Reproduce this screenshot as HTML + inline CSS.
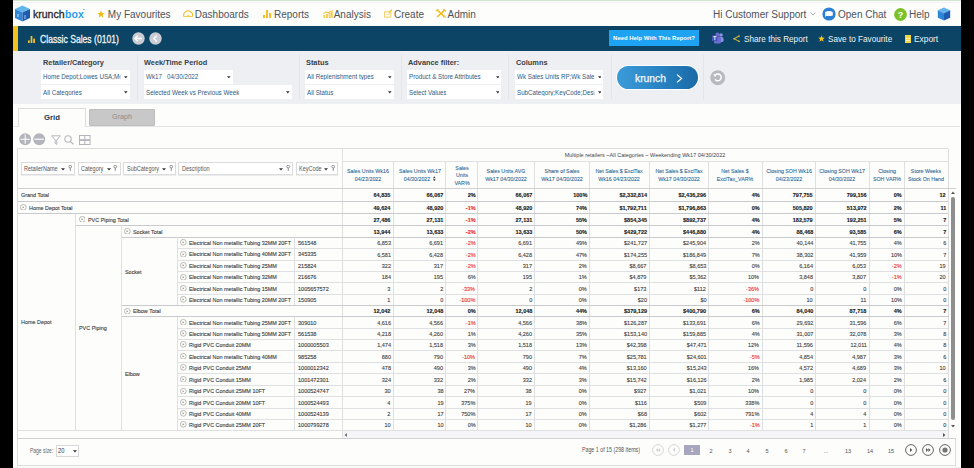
<!DOCTYPE html><html><head><meta charset="utf-8"><style>html,body{margin:0;padding:0;}body{width:974px;height:468px;overflow:hidden;position:relative;background:#fdfdfb;font-family:"Liberation Sans",sans-serif;}</style></head><body>
<div style="position:absolute;left:13px;top:0px;width:948px;height:1.2px;background:#cfe6cc"></div>
<div style="position:absolute;left:13px;top:2px;width:948px;height:1px;background:#f1f1f6"></div>
<svg style="position:absolute;left:14px;top:5px" width="17" height="17" viewBox="0 0 17 17">
<polygon points="1,4 8.5,0.5 16,4 8.5,7.5" fill="#63b6ec"/>
<polygon points="1,4 8.5,7.5 8.5,16.5 1,13" fill="#2f86d6"/>
<polygon points="8.5,7.5 16,4 16,13 8.5,16.5" fill="#1d5cae"/>
<rect x="3" y="9" width="2" height="3" fill="#9cc8ef" opacity=".7"/><rect x="10" y="10" width="2" height="4" fill="#8fb8e8" opacity=".6"/>
</svg>
<div style="position:absolute;left:33.1px;top:9.21px;font:normal 11px/11px 'Liberation Sans',sans-serif;color:#2b2b33;white-space:nowrap;transform:scaleX(0.955);transform-origin:0 0;-webkit-text-stroke:0.35px #2b2b33">krunch</div>
<div style="position:absolute;left:64.8px;top:9.21px;font:bold 11px/11px 'Liberation Sans',sans-serif;color:#2b9fe6;white-space:nowrap;transform:scaleX(0.96);transform-origin:0 0;">box</div>
<div style="position:absolute;left:83px;top:9px;width:2px;height:1px;background:#7cc0ec"></div>
<svg style="position:absolute;left:97px;top:10px" width="8" height="8" viewBox="0 0 10 10"><polygon points="5,0.3 6.2,3.7 9.8,3.8 7,6 8,9.6 5,7.5 2,9.6 3,6 0.2,3.8 3.8,3.7" fill="#f2b90f"/></svg>
<div style="position:absolute;left:107.8px;top:10.30px;font:normal 10px/10px 'Liberation Sans',sans-serif;color:#4b535c;white-space:nowrap;transform:scaleX(1);transform-origin:0 0;">My Favourites</div>
<svg style="position:absolute;left:183px;top:9.6px" width="10.2" height="7.6" viewBox="0 0 10.2 7.6"><path d="M1.3,6.8 C0.2,5.6 0.4,3 2.2,2.3 C3,0.5 7.2,0.5 8,2.3 C9.8,3 10,5.6 8.9,6.8 Z" fill="none" stroke="#f5c02a" stroke-width="1.2"/><path d="M4,6.8 C4,4.6 6.2,4.6 6.2,6.8" fill="none" stroke="#f5c02a" stroke-width="1"/></svg>
<div style="position:absolute;left:194.8px;top:10.30px;font:normal 10px/10px 'Liberation Sans',sans-serif;color:#4b535c;white-space:nowrap;transform:scaleX(1);transform-origin:0 0;">Dashboards</div>
<svg style="position:absolute;left:263px;top:10px" width="9" height="8" viewBox="0 0 9 8"><rect x="0" y="5" width="2" height="3" fill="#f4c02a"/><rect x="3" y="0" width="2" height="8" fill="#f4c02a"/><rect x="6" y="3" width="2.2" height="5" fill="#f4c02a"/></svg>
<div style="position:absolute;left:274px;top:10.30px;font:normal 10px/10px 'Liberation Sans',sans-serif;color:#4b535c;white-space:nowrap;transform:scaleX(1);transform-origin:0 0;">Reports</div>
<svg style="position:absolute;left:322.5px;top:10px" width="10" height="8" viewBox="0 0 10 8"><rect x="0.3" y="5" width="2" height="3" fill="#f6cf5a"/><rect x="3" y="4" width="2" height="4" fill="#f6cf5a"/><rect x="5.7" y="3" width="2" height="5" fill="#f6cf5a"/><rect x="8" y="1.5" width="1.8" height="6.5" fill="#f6cf5a"/><path d="M0.3,3.6 L3,2 L5.5,2.8 L9.6,0.4" stroke="#f4c23a" stroke-width="1.1" fill="none"/></svg>
<div style="position:absolute;left:333.7px;top:10.30px;font:normal 10px/10px 'Liberation Sans',sans-serif;color:#4b535c;white-space:nowrap;transform:scaleX(1);transform-origin:0 0;">Analysis</div>
<svg style="position:absolute;left:383.8px;top:9.3px" width="8.6" height="8.8" viewBox="0 0 8.6 8.8"><rect x="0.6" y="2.8" width="6.2" height="5.4" fill="none" stroke="#f6d270" stroke-width="1.1"/><path d="M2.6,5.2 L4,6 L5.8,4.4" stroke="#f6d270" stroke-width="0.9" fill="none"/><path d="M5,3.6 L8.2,0.6" stroke="#f4c84a" stroke-width="1.5"/></svg>
<div style="position:absolute;left:394px;top:10.30px;font:normal 10px/10px 'Liberation Sans',sans-serif;color:#4b535c;white-space:nowrap;transform:scaleX(1);transform-origin:0 0;">Create</div>
<svg style="position:absolute;left:435.9px;top:9.1px" width="10.2" height="9" viewBox="0 0 10.2 9"><path d="M1.2,8 L8.6,1.2" stroke="#f3bb14" stroke-width="1.6"/><path d="M1.2,1 L8.4,7.8" stroke="#f3bb14" stroke-width="1.5"/><path d="M0.3,2 L2.2,0.2 M7.4,0.3 L9.9,2.2" stroke="#f3bb14" stroke-width="1.1"/><circle cx="8.6" cy="7.8" r="1" fill="none" stroke="#f3bb14" stroke-width="0.7"/></svg>
<div style="position:absolute;left:447.5px;top:10.30px;font:normal 10px/10px 'Liberation Sans',sans-serif;color:#4b535c;white-space:nowrap;transform:scaleX(1);transform-origin:0 0;">Admin</div>
<div style="position:absolute;left:713px;top:9.60px;font:normal 10px/10px 'Liberation Sans',sans-serif;color:#4b535c;white-space:nowrap;transform:scaleX(1);transform-origin:0 0;">Hi Customer Support</div>
<svg style="position:absolute;left:809.5px;top:12px" width="6" height="4" viewBox="0 0 6 4"><path d="M0.5,0.5 L3,3 L5.5,0.5" fill="none" stroke="#9aa4b0" stroke-width="0.9"/></svg>
<svg style="position:absolute;left:822px;top:7px" width="14" height="14" viewBox="0 0 14 14"><circle cx="7" cy="7" r="6.6" fill="#2b7fd4"/><path d="M3.2,5 Q7,3 10.8,5 L10.8,8.4 Q7,9.6 4.5,8.8 L3.2,10 Z" fill="#fff"/></svg>
<div style="position:absolute;left:838px;top:9.60px;font:normal 10px/10px 'Liberation Sans',sans-serif;color:#4b535c;white-space:nowrap;transform:scaleX(1);transform-origin:0 0;">Open Chat</div>
<svg style="position:absolute;left:893.5px;top:7.5px" width="13" height="13" viewBox="0 0 13 13"><circle cx="6.5" cy="6.5" r="6.4" fill="#7cc12a"/><text x="6.5" y="10" text-anchor="middle" font-family="Liberation Sans" font-weight="bold" font-size="9" fill="#fff">?</text></svg>
<div style="position:absolute;left:909px;top:9.60px;font:normal 10px/10px 'Liberation Sans',sans-serif;color:#4b535c;white-space:nowrap;transform:scaleX(1);transform-origin:0 0;">Help</div>
<svg style="position:absolute;left:937px;top:7px" width="14" height="14" viewBox="0 0 17 17">
<polygon points="1,4 8.5,0.5 16,4 8.5,7.5" fill="#63b6ec"/>
<polygon points="1,4 8.5,7.5 8.5,16.5 1,13" fill="#2f86d6"/>
<polygon points="8.5,7.5 16,4 16,13 8.5,16.5" fill="#1d5cae"/></svg>
<div style="position:absolute;left:13px;top:26px;width:948px;height:25px;background:#0b4464"></div>
<div style="position:absolute;left:13px;top:26px;width:4.5px;height:25px;background:#f3c21f"></div>
<svg style="position:absolute;left:27.5px;top:36px" width="7" height="7" viewBox="0 0 8 8"><rect x="0" y="5" width="2" height="3" fill="#f4c02a"/><rect x="3" y="0" width="2" height="8" fill="#f4c02a"/><rect x="6" y="3" width="2" height="5" fill="#f4c02a"/></svg>
<div style="position:absolute;left:40px;top:34.45px;font:normal 10.5px/10.5px 'Liberation Sans',sans-serif;color:#eef2f5;white-space:nowrap;transform:scaleX(0.82);transform-origin:0 0;-webkit-text-stroke:0.3px #eef2f5">Classic Sales (0101)</div>
<svg style="position:absolute;left:132px;top:32px" width="13" height="13" viewBox="0 0 13 13"><circle cx="6.5" cy="6.5" r="6.2" fill="#c9ccd3"/><path d="M3,6.5 L10,6.5 M5.8,3.7 L3,6.5 L5.8,9.3" stroke="#fff" stroke-width="1.3" fill="none"/></svg>
<svg style="position:absolute;left:149px;top:32px" width="13" height="13" viewBox="0 0 13 13"><circle cx="6.5" cy="6.5" r="6.2" fill="#c9ccd3"/><path d="M7.8,3.5 L4.8,6.5 L7.8,9.5" stroke="#fff" stroke-width="1.3" fill="none"/></svg>
<div style="position:absolute;left:609px;top:30px;width:90px;height:15.6px;background:#1ea2f2"></div>
<div style="position:absolute;left:354px;width:600px;text-align:center;top:34.96px;font:bold 6px/6px 'Liberation Sans',sans-serif;color:#fff;white-space:nowrap;transform:scaleX(0.99);transform-origin:50% 0;">Need Help With This Report?</div>
<svg style="position:absolute;left:712px;top:32px" width="12" height="12" viewBox="0 0 12 12"><circle cx="9" cy="3" r="1.8" fill="#8b8fe6"/><rect x="6" y="5" width="5.5" height="5" rx="1.5" fill="#8b8fe6"/><circle cx="5.5" cy="2.5" r="2" fill="#6a6fd0"/><rect x="2" y="4.5" width="7" height="7" rx="1.5" fill="#6a6fd0"/><rect x="0" y="3.5" width="5.5" height="5.5" fill="#4e52b8"/><text x="2.7" y="8" text-anchor="middle" font-family="Liberation Sans" font-weight="bold" font-size="5" fill="#fff">T</text></svg>
<svg style="position:absolute;left:732.8px;top:34.8px" width="7" height="7.4" viewBox="0 0 7 7.4"><path d="M6,1 L1.2,3.7 L6,6.4" stroke="#c4b040" stroke-width="1.1" fill="none"/><circle cx="6" cy="1.1" r="0.9" fill="#c8b444"/><circle cx="1.1" cy="3.7" r="0.9" fill="#c8b444"/><circle cx="6" cy="6.3" r="0.9" fill="#c8b444"/></svg>
<div style="position:absolute;left:744px;top:34.59px;font:normal 9px/9px 'Liberation Sans',sans-serif;color:#eef2f5;white-space:nowrap;transform:scaleX(0.91);transform-origin:0 0;">Share this Report</div>
<svg style="position:absolute;left:818px;top:34.5px" width="7" height="7" viewBox="0 0 10 10"><polygon points="5,0.3 6.2,3.7 9.8,3.8 7,6 8,9.6 5,7.5 2,9.6 3,6 0.2,3.8 3.8,3.7" fill="#f5c518"/></svg>
<div style="position:absolute;left:827.5px;top:34.59px;font:normal 9px/9px 'Liberation Sans',sans-serif;color:#eef2f5;white-space:nowrap;transform:scaleX(0.91);transform-origin:0 0;">Save to Favourite</div>
<div style="position:absolute;left:905px;top:34.5px;width:6px;height:8px;background:#f3d44a"><div style="position:absolute;left:1px;top:3px;width:4px;height:1px;background:#fff7b0"></div><div style="position:absolute;left:1px;top:5px;width:4px;height:1px;background:#fff7b0"></div></div>
<div style="position:absolute;left:913.7px;top:34.59px;font:normal 9px/9px 'Liberation Sans',sans-serif;color:#eef2f5;white-space:nowrap;transform:scaleX(0.93);transform-origin:0 0;">Export</div>
<div style="position:absolute;left:13px;top:51px;width:948px;height:52.8px;background:#edeff2"></div>
<div style="position:absolute;left:137px;top:55px;width:1px;height:45px;background:#e3e5e8"></div>
<div style="position:absolute;left:298.5px;top:55px;width:1.0px;height:45px;background:#e3e5e8"></div>
<div style="position:absolute;left:401px;top:55px;width:1px;height:45px;background:#e3e5e8"></div>
<div style="position:absolute;left:508px;top:55px;width:1px;height:45px;background:#e3e5e8"></div>
<div style="position:absolute;left:610.5px;top:55px;width:1.0px;height:45px;background:#e3e5e8"></div>
<div style="position:absolute;left:703.2px;top:55px;width:1.0px;height:45px;background:#e3e5e8"></div>
<div style="position:absolute;left:42.5px;top:59.38px;font:bold 8px/8px 'Liberation Sans',sans-serif;color:#3a3f45;white-space:nowrap;transform:scaleX(0.92);transform-origin:0 0;">Retailer/Category</div>
<div style="position:absolute;left:41px;top:69.8px;width:89px;height:14.0px;background:#ffffff"></div>
<div style="position:absolute;left:43px;top:73.17px;font:normal 7px/7px 'Liberation Sans',sans-serif;color:#2d5b84;white-space:nowrap;transform:scaleX(0.89);transform-origin:0 0;max-width:87.1px;overflow:hidden">Home Depot;Lowes USA;Menards</div>
<svg style="position:absolute;left:124.40px;top:75.60px" width="3.6" height="2.6" viewBox="0 0 3.6 2.6"><path d="M0,0.2 H3.6 L1.8,2.4 Z" fill="#333"/></svg>
<div style="position:absolute;left:41px;top:84.8px;width:89px;height:14.1px;background:#ffffff"></div>
<div style="position:absolute;left:43px;top:88.97px;font:normal 7px/7px 'Liberation Sans',sans-serif;color:#2d5b84;white-space:nowrap;transform:scaleX(0.89);transform-origin:0 0;max-width:87.1px;overflow:hidden">All Categories</div>
<svg style="position:absolute;left:124.40px;top:91.40px" width="3.6" height="2.6" viewBox="0 0 3.6 2.6"><path d="M0,0.2 H3.6 L1.8,2.4 Z" fill="#333"/></svg>
<div style="position:absolute;left:144.4px;top:59.38px;font:bold 8px/8px 'Liberation Sans',sans-serif;color:#3a3f45;white-space:nowrap;transform:scaleX(0.92);transform-origin:0 0;">Week/Time Period</div>
<div style="position:absolute;left:144px;top:69.8px;width:88.6px;height:14.0px;background:#ffffff"></div>
<div style="position:absolute;left:146px;top:73.17px;font:normal 7px/7px 'Liberation Sans',sans-serif;color:#2d5b84;white-space:nowrap;transform:scaleX(0.89);transform-origin:0 0;max-width:86.6px;overflow:hidden">Wk17   04/30/2022</div>
<svg style="position:absolute;left:227.00px;top:75.60px" width="3.6" height="2.6" viewBox="0 0 3.6 2.6"><path d="M0,0.2 H3.6 L1.8,2.4 Z" fill="#333"/></svg>
<div style="position:absolute;left:144px;top:84.8px;width:147.7px;height:13.8px;background:#ffffff"></div>
<div style="position:absolute;left:146px;top:88.97px;font:normal 7px/7px 'Liberation Sans',sans-serif;color:#2d5b84;white-space:nowrap;transform:scaleX(0.89);transform-origin:0 0;max-width:153.0px;overflow:hidden">Selected Week vs Previous Week</div>
<svg style="position:absolute;left:286.10px;top:91.40px" width="3.6" height="2.6" viewBox="0 0 3.6 2.6"><path d="M0,0.2 H3.6 L1.8,2.4 Z" fill="#333"/></svg>
<div style="position:absolute;left:306.3px;top:59.38px;font:bold 8px/8px 'Liberation Sans',sans-serif;color:#3a3f45;white-space:nowrap;transform:scaleX(0.92);transform-origin:0 0;">Status</div>
<div style="position:absolute;left:304.8px;top:69.8px;width:89.1px;height:14.0px;background:#ffffff"></div>
<div style="position:absolute;left:306.8px;top:73.17px;font:normal 7px/7px 'Liberation Sans',sans-serif;color:#2d5b84;white-space:nowrap;transform:scaleX(0.89);transform-origin:0 0;max-width:87.2px;overflow:hidden">All Replenishment types</div>
<svg style="position:absolute;left:388.30px;top:75.60px" width="3.6" height="2.6" viewBox="0 0 3.6 2.6"><path d="M0,0.2 H3.6 L1.8,2.4 Z" fill="#333"/></svg>
<div style="position:absolute;left:304.8px;top:84.8px;width:89.1px;height:13.8px;background:#ffffff"></div>
<div style="position:absolute;left:306.8px;top:88.97px;font:normal 7px/7px 'Liberation Sans',sans-serif;color:#2d5b84;white-space:nowrap;transform:scaleX(0.89);transform-origin:0 0;max-width:87.2px;overflow:hidden">All Status</div>
<svg style="position:absolute;left:388.30px;top:91.40px" width="3.6" height="2.6" viewBox="0 0 3.6 2.6"><path d="M0,0.2 H3.6 L1.8,2.4 Z" fill="#333"/></svg>
<div style="position:absolute;left:408.3px;top:59.38px;font:bold 8px/8px 'Liberation Sans',sans-serif;color:#3a3f45;white-space:nowrap;transform:scaleX(0.92);transform-origin:0 0;">Advance filter:</div>
<div style="position:absolute;left:407.4px;top:69.8px;width:93.9px;height:14.0px;background:#ffffff"></div>
<div style="position:absolute;left:409.4px;top:73.17px;font:normal 7px/7px 'Liberation Sans',sans-serif;color:#2d5b84;white-space:nowrap;transform:scaleX(0.89);transform-origin:0 0;max-width:92.6px;overflow:hidden">Product &amp; Store Attributes</div>
<svg style="position:absolute;left:495.70px;top:75.60px" width="3.6" height="2.6" viewBox="0 0 3.6 2.6"><path d="M0,0.2 H3.6 L1.8,2.4 Z" fill="#333"/></svg>
<div style="position:absolute;left:407.4px;top:84.8px;width:93.9px;height:13.8px;background:#ffffff"></div>
<div style="position:absolute;left:409.4px;top:88.97px;font:normal 7px/7px 'Liberation Sans',sans-serif;color:#2d5b84;white-space:nowrap;transform:scaleX(0.89);transform-origin:0 0;max-width:92.6px;overflow:hidden">Select Values</div>
<svg style="position:absolute;left:495.70px;top:91.40px" width="3.6" height="2.6" viewBox="0 0 3.6 2.6"><path d="M0,0.2 H3.6 L1.8,2.4 Z" fill="#333"/></svg>
<div style="position:absolute;left:516px;top:59.38px;font:bold 8px/8px 'Liberation Sans',sans-serif;color:#3a3f45;white-space:nowrap;transform:scaleX(0.92);transform-origin:0 0;">Columns</div>
<div style="position:absolute;left:514.7px;top:69.8px;width:88.7px;height:14.0px;background:#ffffff"></div>
<div style="position:absolute;left:516.7px;top:73.17px;font:normal 7px/7px 'Liberation Sans',sans-serif;color:#2d5b84;white-space:nowrap;transform:scaleX(0.89);transform-origin:0 0;max-width:86.7px;overflow:hidden">Wk Sales Units RP;Wk Sales Units</div>
<svg style="position:absolute;left:597.80px;top:75.60px" width="3.6" height="2.6" viewBox="0 0 3.6 2.6"><path d="M0,0.2 H3.6 L1.8,2.4 Z" fill="#333"/></svg>
<div style="position:absolute;left:514.7px;top:84.8px;width:88.7px;height:13.8px;background:#ffffff"></div>
<div style="position:absolute;left:516.7px;top:88.97px;font:normal 7px/7px 'Liberation Sans',sans-serif;color:#2d5b84;white-space:nowrap;transform:scaleX(0.89);transform-origin:0 0;max-width:86.7px;overflow:hidden">SubCategory;KeyCode;Description</div>
<svg style="position:absolute;left:597.80px;top:91.40px" width="3.6" height="2.6" viewBox="0 0 3.6 2.6"><path d="M0,0.2 H3.6 L1.8,2.4 Z" fill="#333"/></svg>
<div style="position:absolute;left:616.7px;top:65.7px;width:80.9px;height:23.1px;border-radius:12px;background:linear-gradient(90deg,#3b9bd9,#2a84c4 50%,#1a6aa6);box-shadow:0 0 0 1px #fff"></div>
<div style="position:absolute;left:635.2px;top:73.26px;font:normal 10.5px/10.5px 'Liberation Sans',sans-serif;color:#f4f8fb;white-space:nowrap;transform:scaleX(0.985);transform-origin:0 0;-webkit-text-stroke:0.25px #f4f8fb">krunch</div>
<svg style="position:absolute;left:676px;top:73.5px" width="7" height="9" viewBox="0 0 7 9"><path d="M1,0.6 L5.6,4.5 L1,8.4" stroke="#fff" stroke-width="1.2" fill="none"/></svg>
<svg style="position:absolute;left:710px;top:70px" width="15.5" height="15.5" viewBox="0 0 16 16"><circle cx="8" cy="8" r="7.7" fill="#b9b9c1"/><path d="M5.2,9.6 A3.5,3.5 0 1 0 5.5,5.2" stroke="#fff" stroke-width="1.5" fill="none"/><polygon points="3.2,4.6 6.8,4.2 5.5,7.2" fill="#fff"/></svg>
<div style="position:absolute;left:13px;top:126px;width:947px;height:1px;background:#e3e4e6"></div>
<div style="position:absolute;left:18px;top:108px;width:68px;height:19px;background:#fdfdfb;border:1px solid #dcdcdc;border-bottom:none;box-sizing:border-box"></div>
<div style="position:absolute;left:-247.7px;width:600px;text-align:center;top:113.78px;font:bold 8px/8px 'Liberation Sans',sans-serif;color:#16364f;white-space:nowrap;transform:scaleX(0.96);transform-origin:50% 0;">Grid</div>
<div style="position:absolute;left:89px;top:109px;width:66px;height:17px;background:#c8c8c8;border:1px solid #bdbdbd;box-sizing:border-box;border-radius:1px"></div>
<div style="position:absolute;left:-178px;width:600px;text-align:center;top:112.92px;font:normal 7.5px/7.5px 'Liberation Sans',sans-serif;color:#8a8a8a;white-space:nowrap;transform:scaleX(0.95);transform-origin:50% 0;">Graph</div>
<svg style="position:absolute;left:18.6px;top:133.3px" width="12.4" height="12.4" viewBox="0 0 12 12"><circle cx="6" cy="6" r="5.8" fill="#b4b4bc"/><path d="M6,1.5 V10.5 M1.5,6 H10.5" stroke="#fff" stroke-width="1"/></svg>
<svg style="position:absolute;left:33.4px;top:133.3px" width="12.4" height="12.4" viewBox="0 0 12 12"><circle cx="6" cy="6" r="5.8" fill="#b4b4bc"/><path d="M1.5,6 H10.5" stroke="#fff" stroke-width="1.1"/></svg>
<svg style="position:absolute;left:51px;top:134.5px" width="10" height="10" viewBox="0 0 10 10"><path d="M0.6,0.8 H9.4 L5.8,5 V9.4 L4.2,8.4 V5 Z" fill="none" stroke="#b4b4bc" stroke-width="1"/></svg>
<svg style="position:absolute;left:64px;top:135px" width="10" height="10" viewBox="0 0 10 10"><circle cx="4" cy="4" r="3.2" fill="none" stroke="#b4b4bc" stroke-width="1.1"/><path d="M6.4,6.4 L9.4,9.4" stroke="#b4b4bc" stroke-width="1.3"/></svg>
<svg style="position:absolute;left:79px;top:135px" width="11.5" height="10" viewBox="0 0 11.5 10"><rect x="0.5" y="0.5" width="10.5" height="9" fill="none" stroke="#b4b4bc" stroke-width="1"/><path d="M5.75,0.5 V9.5" stroke="#b4b4bc" stroke-width="1"/><rect x="0.5" y="4.2" width="10.5" height="1.8" fill="#b4b4bc"/></svg>
<div style="position:absolute;left:17.6px;top:148.2px;width:930.9px;height:1.0px;background:#dcdcdc"></div>
<div style="position:absolute;left:17.1px;top:148.2px;width:1.0px;height:290.3px;background:#dcdcdc"></div>
<div style="position:absolute;left:948.0px;top:149px;width:1.0px;height:289.5px;background:#dcdcdc"></div>
<div style="position:absolute;left:342.2px;top:160.7px;width:606.3px;height:1.0px;background:#dfe0e2"></div>
<div style="position:absolute;left:341.7px;top:149px;width:1.0px;height:281.4px;background:#dfe0e2"></div>
<div style="position:absolute;left:392.9px;top:161.2px;width:1.0px;height:269.2px;background:#dfe0e2"></div>
<div style="position:absolute;left:445.3px;top:161.2px;width:1.0px;height:269.2px;background:#dfe0e2"></div>
<div style="position:absolute;left:477.4px;top:161.2px;width:1.0px;height:269.2px;background:#dfe0e2"></div>
<div style="position:absolute;left:534.0px;top:161.2px;width:1.0px;height:269.2px;background:#dfe0e2"></div>
<div style="position:absolute;left:589.1px;top:161.2px;width:1.0px;height:269.2px;background:#dfe0e2"></div>
<div style="position:absolute;left:648.8px;top:161.2px;width:1.0px;height:269.2px;background:#dfe0e2"></div>
<div style="position:absolute;left:708.4px;top:161.2px;width:1.0px;height:269.2px;background:#dfe0e2"></div>
<div style="position:absolute;left:761.5px;top:161.2px;width:1.0px;height:269.2px;background:#dfe0e2"></div>
<div style="position:absolute;left:815.1px;top:161.2px;width:1.0px;height:269.2px;background:#dfe0e2"></div>
<div style="position:absolute;left:868.5px;top:161.2px;width:1.0px;height:269.2px;background:#dfe0e2"></div>
<div style="position:absolute;left:903.7px;top:161.2px;width:1.0px;height:269.2px;background:#dfe0e2"></div>
<div style="position:absolute;left:17.6px;top:187.5px;width:938.9px;height:1.0px;background:#d0d1d3"></div>
<div style="position:absolute;left:345.4px;width:600px;text-align:center;top:152.16px;font:normal 6.2px/6.2px 'Liberation Sans',sans-serif;color:#3f444a;white-space:nowrap;transform:scaleX(0.89);transform-origin:50% 0;">Multiple retailers ~All Categories ~ Weekending Wk17 04/30/2022</div>
<div style="position:absolute;left:20.8px;top:162.3px;width:53.9px;height:12.4px;background:#fff;border:1px solid #dcdcdc;box-sizing:border-box;box-shadow:0 1px 0 #ececec"></div>
<div style="position:absolute;left:24.2px;top:165.76px;font:normal 6.4px/6.4px 'Liberation Sans',sans-serif;color:#555;white-space:nowrap;transform:scaleX(0.86);transform-origin:0 0;">RetailerName</div>
<svg style="position:absolute;left:60.7px;top:168.3px" width="4" height="3" viewBox="0 0 4 3"><path d="M0,0.2 H4 L2,2.6 Z" fill="#333"/></svg>
<svg style="position:absolute;left:67.5px;top:164.8px" width="4.5" height="6" viewBox="0 0 4.5 6"><circle cx="2.25" cy="1.6" r="1.4" fill="none" stroke="#777" stroke-width="0.8"/><path d="M2.25,3 V6" stroke="#777" stroke-width="0.8"/></svg>
<div style="position:absolute;left:77.9px;top:162.3px;width:42.7px;height:12.4px;background:#fff;border:1px solid #dcdcdc;box-sizing:border-box;box-shadow:0 1px 0 #ececec"></div>
<div style="position:absolute;left:81.30000000000001px;top:165.76px;font:normal 6.4px/6.4px 'Liberation Sans',sans-serif;color:#555;white-space:nowrap;transform:scaleX(0.86);transform-origin:0 0;">Category</div>
<svg style="position:absolute;left:106.6px;top:168.3px" width="4" height="3" viewBox="0 0 4 3"><path d="M0,0.2 H4 L2,2.6 Z" fill="#333"/></svg>
<svg style="position:absolute;left:113.39999999999999px;top:164.8px" width="4.5" height="6" viewBox="0 0 4.5 6"><circle cx="2.25" cy="1.6" r="1.4" fill="none" stroke="#777" stroke-width="0.8"/><path d="M2.25,3 V6" stroke="#777" stroke-width="0.8"/></svg>
<div style="position:absolute;left:123.4px;top:162.3px;width:52.4px;height:12.4px;background:#fff;border:1px solid #dcdcdc;box-sizing:border-box;box-shadow:0 1px 0 #ececec"></div>
<div style="position:absolute;left:126.80000000000001px;top:165.76px;font:normal 6.4px/6.4px 'Liberation Sans',sans-serif;color:#555;white-space:nowrap;transform:scaleX(0.86);transform-origin:0 0;">SubCategory</div>
<svg style="position:absolute;left:161.8px;top:168.3px" width="4" height="3" viewBox="0 0 4 3"><path d="M0,0.2 H4 L2,2.6 Z" fill="#333"/></svg>
<svg style="position:absolute;left:168.60000000000002px;top:164.8px" width="4.5" height="6" viewBox="0 0 4.5 6"><circle cx="2.25" cy="1.6" r="1.4" fill="none" stroke="#777" stroke-width="0.8"/><path d="M2.25,3 V6" stroke="#777" stroke-width="0.8"/></svg>
<div style="position:absolute;left:178.2px;top:162.3px;width:115.1px;height:12.4px;background:#fff;border:1px solid #dcdcdc;box-sizing:border-box;box-shadow:0 1px 0 #ececec"></div>
<div style="position:absolute;left:181.6px;top:165.76px;font:normal 6.4px/6.4px 'Liberation Sans',sans-serif;color:#555;white-space:nowrap;transform:scaleX(0.86);transform-origin:0 0;">Description</div>
<svg style="position:absolute;left:279.3px;top:168.3px" width="4" height="3" viewBox="0 0 4 3"><path d="M0,0.2 H4 L2,2.6 Z" fill="#333"/></svg>
<svg style="position:absolute;left:286.1px;top:164.8px" width="4.5" height="6" viewBox="0 0 4.5 6"><circle cx="2.25" cy="1.6" r="1.4" fill="none" stroke="#777" stroke-width="0.8"/><path d="M2.25,3 V6" stroke="#777" stroke-width="0.8"/></svg>
<div style="position:absolute;left:296px;top:162.3px;width:42.4px;height:12.4px;background:#fff;border:1px solid #dcdcdc;box-sizing:border-box;box-shadow:0 1px 0 #ececec"></div>
<div style="position:absolute;left:299.4px;top:165.76px;font:normal 6.4px/6.4px 'Liberation Sans',sans-serif;color:#555;white-space:nowrap;transform:scaleX(0.86);transform-origin:0 0;">KeyCode</div>
<svg style="position:absolute;left:324.4px;top:168.3px" width="4" height="3" viewBox="0 0 4 3"><path d="M0,0.2 H4 L2,2.6 Z" fill="#333"/></svg>
<svg style="position:absolute;left:331.2px;top:164.8px" width="4.5" height="6" viewBox="0 0 4.5 6"><circle cx="2.25" cy="1.6" r="1.4" fill="none" stroke="#777" stroke-width="0.8"/><path d="M2.25,3 V6" stroke="#777" stroke-width="0.8"/></svg>
<div style="position:absolute;left:67.79999999999995px;width:600px;text-align:center;top:168.26px;font:normal 6.1px/6.1px 'Liberation Sans',sans-serif;color:#2d6896;white-space:nowrap;transform:scaleX(0.87);transform-origin:50% 0;;-webkit-text-stroke:0.1px #2d6896">Sales Units Wk16</div>
<div style="position:absolute;left:67.79999999999995px;width:600px;text-align:center;top:175.76px;font:normal 6.1px/6.1px 'Liberation Sans',sans-serif;color:#2d6896;white-space:nowrap;transform:scaleX(0.87);transform-origin:50% 0;;-webkit-text-stroke:0.1px #2d6896">04/23/2022</div>
<div style="position:absolute;left:119.60000000000002px;width:600px;text-align:center;top:168.26px;font:normal 6.1px/6.1px 'Liberation Sans',sans-serif;color:#2d6896;white-space:nowrap;transform:scaleX(0.87);transform-origin:50% 0;;-webkit-text-stroke:0.1px #2d6896">Sales Units Wk17</div>
<div style="position:absolute;left:116.60000000000002px;width:600px;text-align:center;top:175.76px;font:normal 6.1px/6.1px 'Liberation Sans',sans-serif;color:#2d6896;white-space:nowrap;transform:scaleX(0.87);transform-origin:50% 0;;-webkit-text-stroke:0.1px #2d6896">04/30/2022</div>
<div style="position:absolute;left:161.85000000000002px;width:600px;text-align:center;top:164.51px;font:normal 6.1px/6.1px 'Liberation Sans',sans-serif;color:#2d6896;white-space:nowrap;transform:scaleX(0.87);transform-origin:50% 0;;-webkit-text-stroke:0.1px #2d6896">Sales</div>
<div style="position:absolute;left:161.85000000000002px;width:600px;text-align:center;top:172.01px;font:normal 6.1px/6.1px 'Liberation Sans',sans-serif;color:#2d6896;white-space:nowrap;transform:scaleX(0.87);transform-origin:50% 0;;-webkit-text-stroke:0.1px #2d6896">Units</div>
<div style="position:absolute;left:161.85000000000002px;width:600px;text-align:center;top:179.51px;font:normal 6.1px/6.1px 'Liberation Sans',sans-serif;color:#2d6896;white-space:nowrap;transform:scaleX(0.87);transform-origin:50% 0;;-webkit-text-stroke:0.1px #2d6896">VAR%</div>
<div style="position:absolute;left:206.2px;width:600px;text-align:center;top:168.26px;font:normal 6.1px/6.1px 'Liberation Sans',sans-serif;color:#2d6896;white-space:nowrap;transform:scaleX(0.87);transform-origin:50% 0;;-webkit-text-stroke:0.1px #2d6896">Sales Units AVG</div>
<div style="position:absolute;left:206.2px;width:600px;text-align:center;top:175.76px;font:normal 6.1px/6.1px 'Liberation Sans',sans-serif;color:#2d6896;white-space:nowrap;transform:scaleX(0.87);transform-origin:50% 0;;-webkit-text-stroke:0.1px #2d6896">Wk17 04/30/2022</div>
<div style="position:absolute;left:262.04999999999995px;width:600px;text-align:center;top:168.26px;font:normal 6.1px/6.1px 'Liberation Sans',sans-serif;color:#2d6896;white-space:nowrap;transform:scaleX(0.87);transform-origin:50% 0;;-webkit-text-stroke:0.1px #2d6896">Share of Sales</div>
<div style="position:absolute;left:262.04999999999995px;width:600px;text-align:center;top:175.76px;font:normal 6.1px/6.1px 'Liberation Sans',sans-serif;color:#2d6896;white-space:nowrap;transform:scaleX(0.87);transform-origin:50% 0;;-webkit-text-stroke:0.1px #2d6896">Wk17 04/30/2022</div>
<div style="position:absolute;left:319.45000000000005px;width:600px;text-align:center;top:168.26px;font:normal 6.1px/6.1px 'Liberation Sans',sans-serif;color:#2d6896;white-space:nowrap;transform:scaleX(0.87);transform-origin:50% 0;;-webkit-text-stroke:0.1px #2d6896">Net Sales $ ExclTax</div>
<div style="position:absolute;left:319.45000000000005px;width:600px;text-align:center;top:175.76px;font:normal 6.1px/6.1px 'Liberation Sans',sans-serif;color:#2d6896;white-space:nowrap;transform:scaleX(0.87);transform-origin:50% 0;;-webkit-text-stroke:0.1px #2d6896">Wk16 04/23/2022</div>
<div style="position:absolute;left:379.0999999999999px;width:600px;text-align:center;top:168.26px;font:normal 6.1px/6.1px 'Liberation Sans',sans-serif;color:#2d6896;white-space:nowrap;transform:scaleX(0.87);transform-origin:50% 0;;-webkit-text-stroke:0.1px #2d6896">Net Sales $ ExclTax</div>
<div style="position:absolute;left:379.0999999999999px;width:600px;text-align:center;top:175.76px;font:normal 6.1px/6.1px 'Liberation Sans',sans-serif;color:#2d6896;white-space:nowrap;transform:scaleX(0.87);transform-origin:50% 0;;-webkit-text-stroke:0.1px #2d6896">Wk17 04/30/2022</div>
<div style="position:absolute;left:435.45000000000005px;width:600px;text-align:center;top:168.26px;font:normal 6.1px/6.1px 'Liberation Sans',sans-serif;color:#2d6896;white-space:nowrap;transform:scaleX(0.87);transform-origin:50% 0;;-webkit-text-stroke:0.1px #2d6896">Net Sales $</div>
<div style="position:absolute;left:435.45000000000005px;width:600px;text-align:center;top:175.76px;font:normal 6.1px/6.1px 'Liberation Sans',sans-serif;color:#2d6896;white-space:nowrap;transform:scaleX(0.87);transform-origin:50% 0;;-webkit-text-stroke:0.1px #2d6896">ExclTax_VAR%</div>
<div style="position:absolute;left:488.79999999999995px;width:600px;text-align:center;top:168.26px;font:normal 6.1px/6.1px 'Liberation Sans',sans-serif;color:#2d6896;white-space:nowrap;transform:scaleX(0.87);transform-origin:50% 0;;-webkit-text-stroke:0.1px #2d6896">Closing SOH Wk16</div>
<div style="position:absolute;left:488.79999999999995px;width:600px;text-align:center;top:175.76px;font:normal 6.1px/6.1px 'Liberation Sans',sans-serif;color:#2d6896;white-space:nowrap;transform:scaleX(0.87);transform-origin:50% 0;;-webkit-text-stroke:0.1px #2d6896">04/23/2022</div>
<div style="position:absolute;left:542.3px;width:600px;text-align:center;top:168.26px;font:normal 6.1px/6.1px 'Liberation Sans',sans-serif;color:#2d6896;white-space:nowrap;transform:scaleX(0.87);transform-origin:50% 0;;-webkit-text-stroke:0.1px #2d6896">Closing SOH Wk17</div>
<div style="position:absolute;left:542.3px;width:600px;text-align:center;top:175.76px;font:normal 6.1px/6.1px 'Liberation Sans',sans-serif;color:#2d6896;white-space:nowrap;transform:scaleX(0.87);transform-origin:50% 0;;-webkit-text-stroke:0.1px #2d6896">04/30/2022</div>
<div style="position:absolute;left:586.6px;width:600px;text-align:center;top:168.26px;font:normal 6.1px/6.1px 'Liberation Sans',sans-serif;color:#2d6896;white-space:nowrap;transform:scaleX(0.87);transform-origin:50% 0;;-webkit-text-stroke:0.1px #2d6896">Closing</div>
<div style="position:absolute;left:586.6px;width:600px;text-align:center;top:175.76px;font:normal 6.1px/6.1px 'Liberation Sans',sans-serif;color:#2d6896;white-space:nowrap;transform:scaleX(0.87);transform-origin:50% 0;;-webkit-text-stroke:0.1px #2d6896">SOH VAR%</div>
<div style="position:absolute;left:626.35px;width:600px;text-align:center;top:168.26px;font:normal 6.1px/6.1px 'Liberation Sans',sans-serif;color:#2d6896;white-space:nowrap;transform:scaleX(0.87);transform-origin:50% 0;;-webkit-text-stroke:0.1px #2d6896">Store Weeks</div>
<div style="position:absolute;left:626.35px;width:600px;text-align:center;top:175.76px;font:normal 6.1px/6.1px 'Liberation Sans',sans-serif;color:#2d6896;white-space:nowrap;transform:scaleX(0.87);transform-origin:50% 0;;-webkit-text-stroke:0.1px #2d6896">Stock On Hand</div>
<svg style="position:absolute;left:433px;top:176.2px" width="2.6" height="5.5" viewBox="0 0 3 6"><path d="M0,2.4 L1.5,0 L3,2.4 Z M0,3.6 L1.5,6 L3,3.6 Z" fill="#333"/></svg>
<div style="position:absolute;left:950.8px;top:197.3px;width:4.2px;height:23px;"></div>
<div style="position:absolute;left:951px;top:197.3px;width:4px;height:223.0px;background:#8e8e8e;border-radius:2px"></div>
<svg style="position:absolute;left:951px;top:191px" width="4" height="3" viewBox="0 0 4 3"><path d="M0,3 L2,0.5 L4,3 Z" fill="#555"/></svg>
<svg style="position:absolute;left:951px;top:424.5px" width="4" height="3" viewBox="0 0 4 3"><path d="M0,0 L2,2.5 L4,0 Z" fill="#555"/></svg>
<div style="position:absolute;left:342.2px;top:430.4px;width:606.3px;height:7.9px;background:#f5f5f7"></div>
<div style="position:absolute;left:341.7px;top:430.4px;width:1.0px;height:7.9px;background:#dfe0e2"></div>
<div style="position:absolute;left:17.6px;top:437.8px;width:930.9px;height:1.0px;background:#d0d1d3"></div>
<svg style="position:absolute;left:344px;top:432.7px" width="3" height="4" viewBox="0 0 3 4"><path d="M3,0 L0.5,2 L3,4 Z" fill="#777"/></svg>
<svg style="position:absolute;left:943px;top:432.5px" width="3" height="4" viewBox="0 0 3 4"><path d="M0,0 L2.5,2 L0,4 Z" fill="#555"/></svg>
<div style="position:absolute;right:583.2px;top:191.91px;font:bold 6px/6px 'Liberation Sans',sans-serif;color:#1a1a1a;white-space:nowrap;transform:scaleX(0.92);transform-origin:100% 0;;-webkit-text-stroke:0.12px #1a1a1a">64,835</div>
<div style="position:absolute;right:530.8px;top:191.91px;font:bold 6px/6px 'Liberation Sans',sans-serif;color:#1a1a1a;white-space:nowrap;transform:scaleX(0.92);transform-origin:100% 0;;-webkit-text-stroke:0.12px #1a1a1a">66,067</div>
<div style="position:absolute;right:498.70000000000005px;top:191.91px;font:bold 6px/6px 'Liberation Sans',sans-serif;color:#1a1a1a;white-space:nowrap;transform:scaleX(0.92);transform-origin:100% 0;;-webkit-text-stroke:0.12px #1a1a1a">2%</div>
<div style="position:absolute;right:442.1px;top:191.91px;font:bold 6px/6px 'Liberation Sans',sans-serif;color:#1a1a1a;white-space:nowrap;transform:scaleX(0.92);transform-origin:100% 0;;-webkit-text-stroke:0.12px #1a1a1a">66,067</div>
<div style="position:absolute;right:387.0px;top:191.91px;font:bold 6px/6px 'Liberation Sans',sans-serif;color:#1a1a1a;white-space:nowrap;transform:scaleX(0.92);transform-origin:100% 0;;-webkit-text-stroke:0.12px #1a1a1a">100%</div>
<div style="position:absolute;right:327.30000000000007px;top:191.91px;font:bold 6px/6px 'Liberation Sans',sans-serif;color:#1a1a1a;white-space:nowrap;transform:scaleX(0.92);transform-origin:100% 0;;-webkit-text-stroke:0.12px #1a1a1a">$2,332,814</div>
<div style="position:absolute;right:267.70000000000005px;top:191.91px;font:bold 6px/6px 'Liberation Sans',sans-serif;color:#1a1a1a;white-space:nowrap;transform:scaleX(0.92);transform-origin:100% 0;;-webkit-text-stroke:0.12px #1a1a1a">$2,436,296</div>
<div style="position:absolute;right:214.60000000000002px;top:191.91px;font:bold 6px/6px 'Liberation Sans',sans-serif;color:#1a1a1a;white-space:nowrap;transform:scaleX(0.92);transform-origin:100% 0;;-webkit-text-stroke:0.12px #1a1a1a">4%</div>
<div style="position:absolute;right:161.0px;top:191.91px;font:bold 6px/6px 'Liberation Sans',sans-serif;color:#1a1a1a;white-space:nowrap;transform:scaleX(0.92);transform-origin:100% 0;;-webkit-text-stroke:0.12px #1a1a1a">797,755</div>
<div style="position:absolute;right:107.60000000000002px;top:191.91px;font:bold 6px/6px 'Liberation Sans',sans-serif;color:#1a1a1a;white-space:nowrap;transform:scaleX(0.92);transform-origin:100% 0;;-webkit-text-stroke:0.12px #1a1a1a">799,156</div>
<div style="position:absolute;right:72.39999999999998px;top:191.91px;font:bold 6px/6px 'Liberation Sans',sans-serif;color:#1a1a1a;white-space:nowrap;transform:scaleX(0.92);transform-origin:100% 0;;-webkit-text-stroke:0.12px #1a1a1a">0%</div>
<div style="position:absolute;right:28.100000000000023px;top:191.91px;font:bold 6px/6px 'Liberation Sans',sans-serif;color:#1a1a1a;white-space:nowrap;transform:scaleX(0.92);transform-origin:100% 0;;-webkit-text-stroke:0.12px #1a1a1a">12</div>
<div style="position:absolute;left:21px;top:191.81px;font:normal 6px/6px 'Liberation Sans',sans-serif;color:#3c3c3c;white-space:nowrap;transform:scaleX(0.905);transform-origin:0 0;;-webkit-text-stroke:0.12px #3c3c3c">Grand Total</div>
<div style="position:absolute;right:583.2px;top:204.61px;font:bold 6px/6px 'Liberation Sans',sans-serif;color:#1a1a1a;white-space:nowrap;transform:scaleX(0.92);transform-origin:100% 0;;-webkit-text-stroke:0.12px #1a1a1a">49,624</div>
<div style="position:absolute;right:530.8px;top:204.61px;font:bold 6px/6px 'Liberation Sans',sans-serif;color:#1a1a1a;white-space:nowrap;transform:scaleX(0.92);transform-origin:100% 0;;-webkit-text-stroke:0.12px #1a1a1a">48,920</div>
<div style="position:absolute;right:498.70000000000005px;top:204.61px;font:bold 6px/6px 'Liberation Sans',sans-serif;color:#ec2f2f;white-space:nowrap;transform:scaleX(0.92);transform-origin:100% 0;;-webkit-text-stroke:0.12px #ec2f2f">-1%</div>
<div style="position:absolute;right:442.1px;top:204.61px;font:bold 6px/6px 'Liberation Sans',sans-serif;color:#1a1a1a;white-space:nowrap;transform:scaleX(0.92);transform-origin:100% 0;;-webkit-text-stroke:0.12px #1a1a1a">48,920</div>
<div style="position:absolute;right:387.0px;top:204.61px;font:bold 6px/6px 'Liberation Sans',sans-serif;color:#1a1a1a;white-space:nowrap;transform:scaleX(0.92);transform-origin:100% 0;;-webkit-text-stroke:0.12px #1a1a1a">74%</div>
<div style="position:absolute;right:327.30000000000007px;top:204.61px;font:bold 6px/6px 'Liberation Sans',sans-serif;color:#1a1a1a;white-space:nowrap;transform:scaleX(0.92);transform-origin:100% 0;;-webkit-text-stroke:0.12px #1a1a1a">$1,792,711</div>
<div style="position:absolute;right:267.70000000000005px;top:204.61px;font:bold 6px/6px 'Liberation Sans',sans-serif;color:#1a1a1a;white-space:nowrap;transform:scaleX(0.92);transform-origin:100% 0;;-webkit-text-stroke:0.12px #1a1a1a">$1,796,863</div>
<div style="position:absolute;right:214.60000000000002px;top:204.61px;font:bold 6px/6px 'Liberation Sans',sans-serif;color:#1a1a1a;white-space:nowrap;transform:scaleX(0.92);transform-origin:100% 0;;-webkit-text-stroke:0.12px #1a1a1a">0%</div>
<div style="position:absolute;right:161.0px;top:204.61px;font:bold 6px/6px 'Liberation Sans',sans-serif;color:#1a1a1a;white-space:nowrap;transform:scaleX(0.92);transform-origin:100% 0;;-webkit-text-stroke:0.12px #1a1a1a">505,820</div>
<div style="position:absolute;right:107.60000000000002px;top:204.61px;font:bold 6px/6px 'Liberation Sans',sans-serif;color:#1a1a1a;white-space:nowrap;transform:scaleX(0.92);transform-origin:100% 0;;-webkit-text-stroke:0.12px #1a1a1a">513,972</div>
<div style="position:absolute;right:72.39999999999998px;top:204.61px;font:bold 6px/6px 'Liberation Sans',sans-serif;color:#1a1a1a;white-space:nowrap;transform:scaleX(0.92);transform-origin:100% 0;;-webkit-text-stroke:0.12px #1a1a1a">2%</div>
<div style="position:absolute;right:28.100000000000023px;top:204.61px;font:bold 6px/6px 'Liberation Sans',sans-serif;color:#1a1a1a;white-space:nowrap;transform:scaleX(0.92);transform-origin:100% 0;;-webkit-text-stroke:0.12px #1a1a1a">11</div>
<svg style="position:absolute;left:20.400000000000002px;top:203.70px" width="6.6" height="6.6" viewBox="0 0 8 8"><circle cx="4" cy="4" r="3.5" fill="none" stroke="#9a9a9a" stroke-width="0.8"/><path d="M3.2,2.6 L5,4 L3.2,5.4 Z" fill="#888"/></svg>
<div style="position:absolute;left:29.400000000000002px;top:204.51px;font:normal 6px/6px 'Liberation Sans',sans-serif;color:#3c3c3c;white-space:nowrap;transform:scaleX(0.905);transform-origin:0 0;;-webkit-text-stroke:0.12px #3c3c3c">Home Depot Total</div>
<div style="position:absolute;right:583.2px;top:216.71px;font:bold 6px/6px 'Liberation Sans',sans-serif;color:#1a1a1a;white-space:nowrap;transform:scaleX(0.92);transform-origin:100% 0;;-webkit-text-stroke:0.12px #1a1a1a">27,486</div>
<div style="position:absolute;right:530.8px;top:216.71px;font:bold 6px/6px 'Liberation Sans',sans-serif;color:#1a1a1a;white-space:nowrap;transform:scaleX(0.92);transform-origin:100% 0;;-webkit-text-stroke:0.12px #1a1a1a">27,131</div>
<div style="position:absolute;right:498.70000000000005px;top:216.71px;font:bold 6px/6px 'Liberation Sans',sans-serif;color:#ec2f2f;white-space:nowrap;transform:scaleX(0.92);transform-origin:100% 0;;-webkit-text-stroke:0.12px #ec2f2f">-1%</div>
<div style="position:absolute;right:442.1px;top:216.71px;font:bold 6px/6px 'Liberation Sans',sans-serif;color:#1a1a1a;white-space:nowrap;transform:scaleX(0.92);transform-origin:100% 0;;-webkit-text-stroke:0.12px #1a1a1a">27,131</div>
<div style="position:absolute;right:387.0px;top:216.71px;font:bold 6px/6px 'Liberation Sans',sans-serif;color:#1a1a1a;white-space:nowrap;transform:scaleX(0.92);transform-origin:100% 0;;-webkit-text-stroke:0.12px #1a1a1a">55%</div>
<div style="position:absolute;right:327.30000000000007px;top:216.71px;font:bold 6px/6px 'Liberation Sans',sans-serif;color:#1a1a1a;white-space:nowrap;transform:scaleX(0.92);transform-origin:100% 0;;-webkit-text-stroke:0.12px #1a1a1a">$854,345</div>
<div style="position:absolute;right:267.70000000000005px;top:216.71px;font:bold 6px/6px 'Liberation Sans',sans-serif;color:#1a1a1a;white-space:nowrap;transform:scaleX(0.92);transform-origin:100% 0;;-webkit-text-stroke:0.12px #1a1a1a">$892,737</div>
<div style="position:absolute;right:214.60000000000002px;top:216.71px;font:bold 6px/6px 'Liberation Sans',sans-serif;color:#1a1a1a;white-space:nowrap;transform:scaleX(0.92);transform-origin:100% 0;;-webkit-text-stroke:0.12px #1a1a1a">4%</div>
<div style="position:absolute;right:161.0px;top:216.71px;font:bold 6px/6px 'Liberation Sans',sans-serif;color:#1a1a1a;white-space:nowrap;transform:scaleX(0.92);transform-origin:100% 0;;-webkit-text-stroke:0.12px #1a1a1a">182,579</div>
<div style="position:absolute;right:107.60000000000002px;top:216.71px;font:bold 6px/6px 'Liberation Sans',sans-serif;color:#1a1a1a;white-space:nowrap;transform:scaleX(0.92);transform-origin:100% 0;;-webkit-text-stroke:0.12px #1a1a1a">192,251</div>
<div style="position:absolute;right:72.39999999999998px;top:216.71px;font:bold 6px/6px 'Liberation Sans',sans-serif;color:#1a1a1a;white-space:nowrap;transform:scaleX(0.92);transform-origin:100% 0;;-webkit-text-stroke:0.12px #1a1a1a">5%</div>
<div style="position:absolute;right:28.100000000000023px;top:216.71px;font:bold 6px/6px 'Liberation Sans',sans-serif;color:#1a1a1a;white-space:nowrap;transform:scaleX(0.92);transform-origin:100% 0;;-webkit-text-stroke:0.12px #1a1a1a">7</div>
<svg style="position:absolute;left:78.6px;top:215.80px" width="6.6" height="6.6" viewBox="0 0 8 8"><circle cx="4" cy="4" r="3.5" fill="none" stroke="#9a9a9a" stroke-width="0.8"/><path d="M3.2,2.6 L5,4 L3.2,5.4 Z" fill="#888"/></svg>
<div style="position:absolute;left:87.6px;top:216.61px;font:normal 6px/6px 'Liberation Sans',sans-serif;color:#3c3c3c;white-space:nowrap;transform:scaleX(0.905);transform-origin:0 0;;-webkit-text-stroke:0.12px #3c3c3c">PVC Piping Total</div>
<div style="position:absolute;right:583.2px;top:228.66px;font:bold 6px/6px 'Liberation Sans',sans-serif;color:#1a1a1a;white-space:nowrap;transform:scaleX(0.92);transform-origin:100% 0;;-webkit-text-stroke:0.12px #1a1a1a">13,944</div>
<div style="position:absolute;right:530.8px;top:228.66px;font:bold 6px/6px 'Liberation Sans',sans-serif;color:#1a1a1a;white-space:nowrap;transform:scaleX(0.92);transform-origin:100% 0;;-webkit-text-stroke:0.12px #1a1a1a">13,633</div>
<div style="position:absolute;right:498.70000000000005px;top:228.66px;font:bold 6px/6px 'Liberation Sans',sans-serif;color:#ec2f2f;white-space:nowrap;transform:scaleX(0.92);transform-origin:100% 0;;-webkit-text-stroke:0.12px #ec2f2f">-2%</div>
<div style="position:absolute;right:442.1px;top:228.66px;font:bold 6px/6px 'Liberation Sans',sans-serif;color:#1a1a1a;white-space:nowrap;transform:scaleX(0.92);transform-origin:100% 0;;-webkit-text-stroke:0.12px #1a1a1a">13,633</div>
<div style="position:absolute;right:387.0px;top:228.66px;font:bold 6px/6px 'Liberation Sans',sans-serif;color:#1a1a1a;white-space:nowrap;transform:scaleX(0.92);transform-origin:100% 0;;-webkit-text-stroke:0.12px #1a1a1a">50%</div>
<div style="position:absolute;right:327.30000000000007px;top:228.66px;font:bold 6px/6px 'Liberation Sans',sans-serif;color:#1a1a1a;white-space:nowrap;transform:scaleX(0.92);transform-origin:100% 0;;-webkit-text-stroke:0.12px #1a1a1a">$429,722</div>
<div style="position:absolute;right:267.70000000000005px;top:228.66px;font:bold 6px/6px 'Liberation Sans',sans-serif;color:#1a1a1a;white-space:nowrap;transform:scaleX(0.92);transform-origin:100% 0;;-webkit-text-stroke:0.12px #1a1a1a">$446,880</div>
<div style="position:absolute;right:214.60000000000002px;top:228.66px;font:bold 6px/6px 'Liberation Sans',sans-serif;color:#1a1a1a;white-space:nowrap;transform:scaleX(0.92);transform-origin:100% 0;;-webkit-text-stroke:0.12px #1a1a1a">4%</div>
<div style="position:absolute;right:161.0px;top:228.66px;font:bold 6px/6px 'Liberation Sans',sans-serif;color:#1a1a1a;white-space:nowrap;transform:scaleX(0.92);transform-origin:100% 0;;-webkit-text-stroke:0.12px #1a1a1a">88,468</div>
<div style="position:absolute;right:107.60000000000002px;top:228.66px;font:bold 6px/6px 'Liberation Sans',sans-serif;color:#1a1a1a;white-space:nowrap;transform:scaleX(0.92);transform-origin:100% 0;;-webkit-text-stroke:0.12px #1a1a1a">93,585</div>
<div style="position:absolute;right:72.39999999999998px;top:228.66px;font:bold 6px/6px 'Liberation Sans',sans-serif;color:#1a1a1a;white-space:nowrap;transform:scaleX(0.92);transform-origin:100% 0;;-webkit-text-stroke:0.12px #1a1a1a">6%</div>
<div style="position:absolute;right:28.100000000000023px;top:228.66px;font:bold 6px/6px 'Liberation Sans',sans-serif;color:#1a1a1a;white-space:nowrap;transform:scaleX(0.92);transform-origin:100% 0;;-webkit-text-stroke:0.12px #1a1a1a">7</div>
<svg style="position:absolute;left:124.3px;top:227.75px" width="6.6" height="6.6" viewBox="0 0 8 8"><circle cx="4" cy="4" r="3.5" fill="none" stroke="#9a9a9a" stroke-width="0.8"/><path d="M3.2,2.6 L5,4 L3.2,5.4 Z" fill="#888"/></svg>
<div style="position:absolute;left:133.3px;top:228.56px;font:normal 6px/6px 'Liberation Sans',sans-serif;color:#3c3c3c;white-space:nowrap;transform:scaleX(0.905);transform-origin:0 0;;-webkit-text-stroke:0.12px #3c3c3c">Socket Total</div>
<div style="position:absolute;right:583.2px;top:240.16px;font:normal 6px/6px 'Liberation Sans',sans-serif;color:#444;white-space:nowrap;transform:scaleX(0.92);transform-origin:100% 0;;-webkit-text-stroke:0.12px #444">6,853</div>
<div style="position:absolute;right:530.8px;top:240.16px;font:normal 6px/6px 'Liberation Sans',sans-serif;color:#444;white-space:nowrap;transform:scaleX(0.92);transform-origin:100% 0;;-webkit-text-stroke:0.12px #444">6,691</div>
<div style="position:absolute;right:498.70000000000005px;top:240.16px;font:normal 6px/6px 'Liberation Sans',sans-serif;color:#ec2f2f;white-space:nowrap;transform:scaleX(0.92);transform-origin:100% 0;;-webkit-text-stroke:0.12px #ec2f2f">-2%</div>
<div style="position:absolute;right:442.1px;top:240.16px;font:normal 6px/6px 'Liberation Sans',sans-serif;color:#444;white-space:nowrap;transform:scaleX(0.92);transform-origin:100% 0;;-webkit-text-stroke:0.12px #444">6,691</div>
<div style="position:absolute;right:387.0px;top:240.16px;font:normal 6px/6px 'Liberation Sans',sans-serif;color:#444;white-space:nowrap;transform:scaleX(0.92);transform-origin:100% 0;;-webkit-text-stroke:0.12px #444">49%</div>
<div style="position:absolute;right:327.30000000000007px;top:240.16px;font:normal 6px/6px 'Liberation Sans',sans-serif;color:#444;white-space:nowrap;transform:scaleX(0.92);transform-origin:100% 0;;-webkit-text-stroke:0.12px #444">$241,727</div>
<div style="position:absolute;right:267.70000000000005px;top:240.16px;font:normal 6px/6px 'Liberation Sans',sans-serif;color:#444;white-space:nowrap;transform:scaleX(0.92);transform-origin:100% 0;;-webkit-text-stroke:0.12px #444">$245,904</div>
<div style="position:absolute;right:214.60000000000002px;top:240.16px;font:normal 6px/6px 'Liberation Sans',sans-serif;color:#444;white-space:nowrap;transform:scaleX(0.92);transform-origin:100% 0;;-webkit-text-stroke:0.12px #444">2%</div>
<div style="position:absolute;right:161.0px;top:240.16px;font:normal 6px/6px 'Liberation Sans',sans-serif;color:#444;white-space:nowrap;transform:scaleX(0.92);transform-origin:100% 0;;-webkit-text-stroke:0.12px #444">40,144</div>
<div style="position:absolute;right:107.60000000000002px;top:240.16px;font:normal 6px/6px 'Liberation Sans',sans-serif;color:#444;white-space:nowrap;transform:scaleX(0.92);transform-origin:100% 0;;-webkit-text-stroke:0.12px #444">41,755</div>
<div style="position:absolute;right:72.39999999999998px;top:240.16px;font:normal 6px/6px 'Liberation Sans',sans-serif;color:#444;white-space:nowrap;transform:scaleX(0.92);transform-origin:100% 0;;-webkit-text-stroke:0.12px #444">4%</div>
<div style="position:absolute;right:28.100000000000023px;top:240.16px;font:normal 6px/6px 'Liberation Sans',sans-serif;color:#444;white-space:nowrap;transform:scaleX(0.92);transform-origin:100% 0;;-webkit-text-stroke:0.12px #444">6</div>
<svg style="position:absolute;left:180.2px;top:239.25px" width="6.6" height="6.6" viewBox="0 0 8 8"><circle cx="4" cy="4" r="3.5" fill="none" stroke="#9a9a9a" stroke-width="0.8"/><path d="M3.2,2.6 L5,4 L3.2,5.4 Z" fill="#888"/></svg>
<div style="position:absolute;left:189px;top:240.06px;font:normal 6px/6px 'Liberation Sans',sans-serif;color:#3c3c3c;white-space:nowrap;transform:scaleX(0.905);transform-origin:0 0;;-webkit-text-stroke:0.12px #3c3c3c">Electrical Non metallic Tubing 32MM 20FT</div>
<div style="position:absolute;left:297.5px;top:240.01px;font:normal 6px/6px 'Liberation Sans',sans-serif;color:#3c3c3c;white-space:nowrap;transform:scaleX(0.92);transform-origin:0 0;;-webkit-text-stroke:0.12px #3c3c3c">561548</div>
<div style="position:absolute;right:583.2px;top:251.56px;font:normal 6px/6px 'Liberation Sans',sans-serif;color:#444;white-space:nowrap;transform:scaleX(0.92);transform-origin:100% 0;;-webkit-text-stroke:0.12px #444">6,581</div>
<div style="position:absolute;right:530.8px;top:251.56px;font:normal 6px/6px 'Liberation Sans',sans-serif;color:#444;white-space:nowrap;transform:scaleX(0.92);transform-origin:100% 0;;-webkit-text-stroke:0.12px #444">6,428</div>
<div style="position:absolute;right:498.70000000000005px;top:251.56px;font:normal 6px/6px 'Liberation Sans',sans-serif;color:#ec2f2f;white-space:nowrap;transform:scaleX(0.92);transform-origin:100% 0;;-webkit-text-stroke:0.12px #ec2f2f">-2%</div>
<div style="position:absolute;right:442.1px;top:251.56px;font:normal 6px/6px 'Liberation Sans',sans-serif;color:#444;white-space:nowrap;transform:scaleX(0.92);transform-origin:100% 0;;-webkit-text-stroke:0.12px #444">6,428</div>
<div style="position:absolute;right:387.0px;top:251.56px;font:normal 6px/6px 'Liberation Sans',sans-serif;color:#444;white-space:nowrap;transform:scaleX(0.92);transform-origin:100% 0;;-webkit-text-stroke:0.12px #444">47%</div>
<div style="position:absolute;right:327.30000000000007px;top:251.56px;font:normal 6px/6px 'Liberation Sans',sans-serif;color:#444;white-space:nowrap;transform:scaleX(0.92);transform-origin:100% 0;;-webkit-text-stroke:0.12px #444">$174,255</div>
<div style="position:absolute;right:267.70000000000005px;top:251.56px;font:normal 6px/6px 'Liberation Sans',sans-serif;color:#444;white-space:nowrap;transform:scaleX(0.92);transform-origin:100% 0;;-webkit-text-stroke:0.12px #444">$186,849</div>
<div style="position:absolute;right:214.60000000000002px;top:251.56px;font:normal 6px/6px 'Liberation Sans',sans-serif;color:#444;white-space:nowrap;transform:scaleX(0.92);transform-origin:100% 0;;-webkit-text-stroke:0.12px #444">7%</div>
<div style="position:absolute;right:161.0px;top:251.56px;font:normal 6px/6px 'Liberation Sans',sans-serif;color:#444;white-space:nowrap;transform:scaleX(0.92);transform-origin:100% 0;;-webkit-text-stroke:0.12px #444">38,302</div>
<div style="position:absolute;right:107.60000000000002px;top:251.56px;font:normal 6px/6px 'Liberation Sans',sans-serif;color:#444;white-space:nowrap;transform:scaleX(0.92);transform-origin:100% 0;;-webkit-text-stroke:0.12px #444">41,959</div>
<div style="position:absolute;right:72.39999999999998px;top:251.56px;font:normal 6px/6px 'Liberation Sans',sans-serif;color:#444;white-space:nowrap;transform:scaleX(0.92);transform-origin:100% 0;;-webkit-text-stroke:0.12px #444">10%</div>
<div style="position:absolute;right:28.100000000000023px;top:251.56px;font:normal 6px/6px 'Liberation Sans',sans-serif;color:#444;white-space:nowrap;transform:scaleX(0.92);transform-origin:100% 0;;-webkit-text-stroke:0.12px #444">7</div>
<svg style="position:absolute;left:180.2px;top:250.65px" width="6.6" height="6.6" viewBox="0 0 8 8"><circle cx="4" cy="4" r="3.5" fill="none" stroke="#9a9a9a" stroke-width="0.8"/><path d="M3.2,2.6 L5,4 L3.2,5.4 Z" fill="#888"/></svg>
<div style="position:absolute;left:189px;top:251.46px;font:normal 6px/6px 'Liberation Sans',sans-serif;color:#3c3c3c;white-space:nowrap;transform:scaleX(0.905);transform-origin:0 0;;-webkit-text-stroke:0.12px #3c3c3c">Electrical Non metallic Tubing 40MM 20FT</div>
<div style="position:absolute;left:297.5px;top:251.41px;font:normal 6px/6px 'Liberation Sans',sans-serif;color:#3c3c3c;white-space:nowrap;transform:scaleX(0.92);transform-origin:0 0;;-webkit-text-stroke:0.12px #3c3c3c">345335</div>
<div style="position:absolute;right:583.2px;top:263.11px;font:normal 6px/6px 'Liberation Sans',sans-serif;color:#444;white-space:nowrap;transform:scaleX(0.92);transform-origin:100% 0;;-webkit-text-stroke:0.12px #444">322</div>
<div style="position:absolute;right:530.8px;top:263.11px;font:normal 6px/6px 'Liberation Sans',sans-serif;color:#444;white-space:nowrap;transform:scaleX(0.92);transform-origin:100% 0;;-webkit-text-stroke:0.12px #444">317</div>
<div style="position:absolute;right:498.70000000000005px;top:263.11px;font:normal 6px/6px 'Liberation Sans',sans-serif;color:#ec2f2f;white-space:nowrap;transform:scaleX(0.92);transform-origin:100% 0;;-webkit-text-stroke:0.12px #ec2f2f">-2%</div>
<div style="position:absolute;right:442.1px;top:263.11px;font:normal 6px/6px 'Liberation Sans',sans-serif;color:#444;white-space:nowrap;transform:scaleX(0.92);transform-origin:100% 0;;-webkit-text-stroke:0.12px #444">317</div>
<div style="position:absolute;right:387.0px;top:263.11px;font:normal 6px/6px 'Liberation Sans',sans-serif;color:#444;white-space:nowrap;transform:scaleX(0.92);transform-origin:100% 0;;-webkit-text-stroke:0.12px #444">2%</div>
<div style="position:absolute;right:327.30000000000007px;top:263.11px;font:normal 6px/6px 'Liberation Sans',sans-serif;color:#444;white-space:nowrap;transform:scaleX(0.92);transform-origin:100% 0;;-webkit-text-stroke:0.12px #444">$8,667</div>
<div style="position:absolute;right:267.70000000000005px;top:263.11px;font:normal 6px/6px 'Liberation Sans',sans-serif;color:#444;white-space:nowrap;transform:scaleX(0.92);transform-origin:100% 0;;-webkit-text-stroke:0.12px #444">$8,653</div>
<div style="position:absolute;right:214.60000000000002px;top:263.11px;font:normal 6px/6px 'Liberation Sans',sans-serif;color:#444;white-space:nowrap;transform:scaleX(0.92);transform-origin:100% 0;;-webkit-text-stroke:0.12px #444">0%</div>
<div style="position:absolute;right:161.0px;top:263.11px;font:normal 6px/6px 'Liberation Sans',sans-serif;color:#444;white-space:nowrap;transform:scaleX(0.92);transform-origin:100% 0;;-webkit-text-stroke:0.12px #444">6,164</div>
<div style="position:absolute;right:107.60000000000002px;top:263.11px;font:normal 6px/6px 'Liberation Sans',sans-serif;color:#444;white-space:nowrap;transform:scaleX(0.92);transform-origin:100% 0;;-webkit-text-stroke:0.12px #444">6,053</div>
<div style="position:absolute;right:72.39999999999998px;top:263.11px;font:normal 6px/6px 'Liberation Sans',sans-serif;color:#ec2f2f;white-space:nowrap;transform:scaleX(0.92);transform-origin:100% 0;;-webkit-text-stroke:0.12px #ec2f2f">-2%</div>
<div style="position:absolute;right:28.100000000000023px;top:263.11px;font:normal 6px/6px 'Liberation Sans',sans-serif;color:#444;white-space:nowrap;transform:scaleX(0.92);transform-origin:100% 0;;-webkit-text-stroke:0.12px #444">19</div>
<svg style="position:absolute;left:180.2px;top:262.20px" width="6.6" height="6.6" viewBox="0 0 8 8"><circle cx="4" cy="4" r="3.5" fill="none" stroke="#9a9a9a" stroke-width="0.8"/><path d="M3.2,2.6 L5,4 L3.2,5.4 Z" fill="#888"/></svg>
<div style="position:absolute;left:189px;top:263.01px;font:normal 6px/6px 'Liberation Sans',sans-serif;color:#3c3c3c;white-space:nowrap;transform:scaleX(0.905);transform-origin:0 0;;-webkit-text-stroke:0.12px #3c3c3c">Electrical Non metallic Tubing 25MM</div>
<div style="position:absolute;left:297.5px;top:262.96px;font:normal 6px/6px 'Liberation Sans',sans-serif;color:#3c3c3c;white-space:nowrap;transform:scaleX(0.92);transform-origin:0 0;;-webkit-text-stroke:0.12px #3c3c3c">215824</div>
<div style="position:absolute;right:583.2px;top:274.46px;font:normal 6px/6px 'Liberation Sans',sans-serif;color:#444;white-space:nowrap;transform:scaleX(0.92);transform-origin:100% 0;;-webkit-text-stroke:0.12px #444">184</div>
<div style="position:absolute;right:530.8px;top:274.46px;font:normal 6px/6px 'Liberation Sans',sans-serif;color:#444;white-space:nowrap;transform:scaleX(0.92);transform-origin:100% 0;;-webkit-text-stroke:0.12px #444">195</div>
<div style="position:absolute;right:498.70000000000005px;top:274.46px;font:normal 6px/6px 'Liberation Sans',sans-serif;color:#444;white-space:nowrap;transform:scaleX(0.92);transform-origin:100% 0;;-webkit-text-stroke:0.12px #444">6%</div>
<div style="position:absolute;right:442.1px;top:274.46px;font:normal 6px/6px 'Liberation Sans',sans-serif;color:#444;white-space:nowrap;transform:scaleX(0.92);transform-origin:100% 0;;-webkit-text-stroke:0.12px #444">195</div>
<div style="position:absolute;right:387.0px;top:274.46px;font:normal 6px/6px 'Liberation Sans',sans-serif;color:#444;white-space:nowrap;transform:scaleX(0.92);transform-origin:100% 0;;-webkit-text-stroke:0.12px #444">1%</div>
<div style="position:absolute;right:327.30000000000007px;top:274.46px;font:normal 6px/6px 'Liberation Sans',sans-serif;color:#444;white-space:nowrap;transform:scaleX(0.92);transform-origin:100% 0;;-webkit-text-stroke:0.12px #444">$4,879</div>
<div style="position:absolute;right:267.70000000000005px;top:274.46px;font:normal 6px/6px 'Liberation Sans',sans-serif;color:#444;white-space:nowrap;transform:scaleX(0.92);transform-origin:100% 0;;-webkit-text-stroke:0.12px #444">$5,362</div>
<div style="position:absolute;right:214.60000000000002px;top:274.46px;font:normal 6px/6px 'Liberation Sans',sans-serif;color:#444;white-space:nowrap;transform:scaleX(0.92);transform-origin:100% 0;;-webkit-text-stroke:0.12px #444">10%</div>
<div style="position:absolute;right:161.0px;top:274.46px;font:normal 6px/6px 'Liberation Sans',sans-serif;color:#444;white-space:nowrap;transform:scaleX(0.92);transform-origin:100% 0;;-webkit-text-stroke:0.12px #444">3,848</div>
<div style="position:absolute;right:107.60000000000002px;top:274.46px;font:normal 6px/6px 'Liberation Sans',sans-serif;color:#444;white-space:nowrap;transform:scaleX(0.92);transform-origin:100% 0;;-webkit-text-stroke:0.12px #444">3,807</div>
<div style="position:absolute;right:72.39999999999998px;top:274.46px;font:normal 6px/6px 'Liberation Sans',sans-serif;color:#ec2f2f;white-space:nowrap;transform:scaleX(0.92);transform-origin:100% 0;;-webkit-text-stroke:0.12px #ec2f2f">-1%</div>
<div style="position:absolute;right:28.100000000000023px;top:274.46px;font:normal 6px/6px 'Liberation Sans',sans-serif;color:#444;white-space:nowrap;transform:scaleX(0.92);transform-origin:100% 0;;-webkit-text-stroke:0.12px #444">20</div>
<svg style="position:absolute;left:180.2px;top:273.55px" width="6.6" height="6.6" viewBox="0 0 8 8"><circle cx="4" cy="4" r="3.5" fill="none" stroke="#9a9a9a" stroke-width="0.8"/><path d="M3.2,2.6 L5,4 L3.2,5.4 Z" fill="#888"/></svg>
<div style="position:absolute;left:189px;top:274.36px;font:normal 6px/6px 'Liberation Sans',sans-serif;color:#3c3c3c;white-space:nowrap;transform:scaleX(0.905);transform-origin:0 0;;-webkit-text-stroke:0.12px #3c3c3c">Electrical Non metallic Tubing 32MM</div>
<div style="position:absolute;left:297.5px;top:274.31px;font:normal 6px/6px 'Liberation Sans',sans-serif;color:#3c3c3c;white-space:nowrap;transform:scaleX(0.92);transform-origin:0 0;;-webkit-text-stroke:0.12px #3c3c3c">216676</div>
<div style="position:absolute;right:583.2px;top:285.76px;font:normal 6px/6px 'Liberation Sans',sans-serif;color:#444;white-space:nowrap;transform:scaleX(0.92);transform-origin:100% 0;;-webkit-text-stroke:0.12px #444">3</div>
<div style="position:absolute;right:530.8px;top:285.76px;font:normal 6px/6px 'Liberation Sans',sans-serif;color:#444;white-space:nowrap;transform:scaleX(0.92);transform-origin:100% 0;;-webkit-text-stroke:0.12px #444">2</div>
<div style="position:absolute;right:498.70000000000005px;top:285.76px;font:normal 6px/6px 'Liberation Sans',sans-serif;color:#ec2f2f;white-space:nowrap;transform:scaleX(0.92);transform-origin:100% 0;;-webkit-text-stroke:0.12px #ec2f2f">-33%</div>
<div style="position:absolute;right:442.1px;top:285.76px;font:normal 6px/6px 'Liberation Sans',sans-serif;color:#444;white-space:nowrap;transform:scaleX(0.92);transform-origin:100% 0;;-webkit-text-stroke:0.12px #444">2</div>
<div style="position:absolute;right:387.0px;top:285.76px;font:normal 6px/6px 'Liberation Sans',sans-serif;color:#444;white-space:nowrap;transform:scaleX(0.92);transform-origin:100% 0;;-webkit-text-stroke:0.12px #444">0%</div>
<div style="position:absolute;right:327.30000000000007px;top:285.76px;font:normal 6px/6px 'Liberation Sans',sans-serif;color:#444;white-space:nowrap;transform:scaleX(0.92);transform-origin:100% 0;;-webkit-text-stroke:0.12px #444">$173</div>
<div style="position:absolute;right:267.70000000000005px;top:285.76px;font:normal 6px/6px 'Liberation Sans',sans-serif;color:#444;white-space:nowrap;transform:scaleX(0.92);transform-origin:100% 0;;-webkit-text-stroke:0.12px #444">$112</div>
<div style="position:absolute;right:214.60000000000002px;top:285.76px;font:normal 6px/6px 'Liberation Sans',sans-serif;color:#ec2f2f;white-space:nowrap;transform:scaleX(0.92);transform-origin:100% 0;;-webkit-text-stroke:0.12px #ec2f2f">-36%</div>
<div style="position:absolute;right:161.0px;top:285.76px;font:normal 6px/6px 'Liberation Sans',sans-serif;color:#444;white-space:nowrap;transform:scaleX(0.92);transform-origin:100% 0;;-webkit-text-stroke:0.12px #444">0</div>
<div style="position:absolute;right:107.60000000000002px;top:285.76px;font:normal 6px/6px 'Liberation Sans',sans-serif;color:#444;white-space:nowrap;transform:scaleX(0.92);transform-origin:100% 0;;-webkit-text-stroke:0.12px #444">0</div>
<div style="position:absolute;right:72.39999999999998px;top:285.76px;font:normal 6px/6px 'Liberation Sans',sans-serif;color:#444;white-space:nowrap;transform:scaleX(0.92);transform-origin:100% 0;;-webkit-text-stroke:0.12px #444">0%</div>
<div style="position:absolute;right:28.100000000000023px;top:285.76px;font:normal 6px/6px 'Liberation Sans',sans-serif;color:#444;white-space:nowrap;transform:scaleX(0.92);transform-origin:100% 0;;-webkit-text-stroke:0.12px #444">0</div>
<svg style="position:absolute;left:180.2px;top:284.85px" width="6.6" height="6.6" viewBox="0 0 8 8"><circle cx="4" cy="4" r="3.5" fill="none" stroke="#9a9a9a" stroke-width="0.8"/><path d="M3.2,2.6 L5,4 L3.2,5.4 Z" fill="#888"/></svg>
<div style="position:absolute;left:189px;top:285.66px;font:normal 6px/6px 'Liberation Sans',sans-serif;color:#3c3c3c;white-space:nowrap;transform:scaleX(0.905);transform-origin:0 0;;-webkit-text-stroke:0.12px #3c3c3c">Electrical Non metallic Tubing 15MM</div>
<div style="position:absolute;left:297.5px;top:285.61px;font:normal 6px/6px 'Liberation Sans',sans-serif;color:#3c3c3c;white-space:nowrap;transform:scaleX(0.92);transform-origin:0 0;;-webkit-text-stroke:0.12px #3c3c3c">1005657572</div>
<div style="position:absolute;right:583.2px;top:297.06px;font:normal 6px/6px 'Liberation Sans',sans-serif;color:#444;white-space:nowrap;transform:scaleX(0.92);transform-origin:100% 0;;-webkit-text-stroke:0.12px #444">1</div>
<div style="position:absolute;right:530.8px;top:297.06px;font:normal 6px/6px 'Liberation Sans',sans-serif;color:#444;white-space:nowrap;transform:scaleX(0.92);transform-origin:100% 0;;-webkit-text-stroke:0.12px #444">0</div>
<div style="position:absolute;right:498.70000000000005px;top:297.06px;font:normal 6px/6px 'Liberation Sans',sans-serif;color:#ec2f2f;white-space:nowrap;transform:scaleX(0.92);transform-origin:100% 0;;-webkit-text-stroke:0.12px #ec2f2f">-100%</div>
<div style="position:absolute;right:442.1px;top:297.06px;font:normal 6px/6px 'Liberation Sans',sans-serif;color:#444;white-space:nowrap;transform:scaleX(0.92);transform-origin:100% 0;;-webkit-text-stroke:0.12px #444">0</div>
<div style="position:absolute;right:387.0px;top:297.06px;font:normal 6px/6px 'Liberation Sans',sans-serif;color:#444;white-space:nowrap;transform:scaleX(0.92);transform-origin:100% 0;;-webkit-text-stroke:0.12px #444">0%</div>
<div style="position:absolute;right:327.30000000000007px;top:297.06px;font:normal 6px/6px 'Liberation Sans',sans-serif;color:#444;white-space:nowrap;transform:scaleX(0.92);transform-origin:100% 0;;-webkit-text-stroke:0.12px #444">$20</div>
<div style="position:absolute;right:267.70000000000005px;top:297.06px;font:normal 6px/6px 'Liberation Sans',sans-serif;color:#444;white-space:nowrap;transform:scaleX(0.92);transform-origin:100% 0;;-webkit-text-stroke:0.12px #444">$0</div>
<div style="position:absolute;right:214.60000000000002px;top:297.06px;font:normal 6px/6px 'Liberation Sans',sans-serif;color:#ec2f2f;white-space:nowrap;transform:scaleX(0.92);transform-origin:100% 0;;-webkit-text-stroke:0.12px #ec2f2f">-100%</div>
<div style="position:absolute;right:161.0px;top:297.06px;font:normal 6px/6px 'Liberation Sans',sans-serif;color:#444;white-space:nowrap;transform:scaleX(0.92);transform-origin:100% 0;;-webkit-text-stroke:0.12px #444">10</div>
<div style="position:absolute;right:107.60000000000002px;top:297.06px;font:normal 6px/6px 'Liberation Sans',sans-serif;color:#444;white-space:nowrap;transform:scaleX(0.92);transform-origin:100% 0;;-webkit-text-stroke:0.12px #444">11</div>
<div style="position:absolute;right:72.39999999999998px;top:297.06px;font:normal 6px/6px 'Liberation Sans',sans-serif;color:#444;white-space:nowrap;transform:scaleX(0.92);transform-origin:100% 0;;-webkit-text-stroke:0.12px #444">10%</div>
<div style="position:absolute;right:28.100000000000023px;top:297.06px;font:normal 6px/6px 'Liberation Sans',sans-serif;color:#444;white-space:nowrap;transform:scaleX(0.92);transform-origin:100% 0;;-webkit-text-stroke:0.12px #444">0</div>
<svg style="position:absolute;left:180.2px;top:296.15px" width="6.6" height="6.6" viewBox="0 0 8 8"><circle cx="4" cy="4" r="3.5" fill="none" stroke="#9a9a9a" stroke-width="0.8"/><path d="M3.2,2.6 L5,4 L3.2,5.4 Z" fill="#888"/></svg>
<div style="position:absolute;left:189px;top:296.96px;font:normal 6px/6px 'Liberation Sans',sans-serif;color:#3c3c3c;white-space:nowrap;transform:scaleX(0.905);transform-origin:0 0;;-webkit-text-stroke:0.12px #3c3c3c">Electrical Non metallic Tubing 20MM 20FT</div>
<div style="position:absolute;left:297.5px;top:296.91px;font:normal 6px/6px 'Liberation Sans',sans-serif;color:#3c3c3c;white-space:nowrap;transform:scaleX(0.92);transform-origin:0 0;;-webkit-text-stroke:0.12px #3c3c3c">150905</div>
<div style="position:absolute;right:583.2px;top:308.41px;font:bold 6px/6px 'Liberation Sans',sans-serif;color:#1a1a1a;white-space:nowrap;transform:scaleX(0.92);transform-origin:100% 0;;-webkit-text-stroke:0.12px #1a1a1a">12,042</div>
<div style="position:absolute;right:530.8px;top:308.41px;font:bold 6px/6px 'Liberation Sans',sans-serif;color:#1a1a1a;white-space:nowrap;transform:scaleX(0.92);transform-origin:100% 0;;-webkit-text-stroke:0.12px #1a1a1a">12,048</div>
<div style="position:absolute;right:498.70000000000005px;top:308.41px;font:bold 6px/6px 'Liberation Sans',sans-serif;color:#1a1a1a;white-space:nowrap;transform:scaleX(0.92);transform-origin:100% 0;;-webkit-text-stroke:0.12px #1a1a1a">0%</div>
<div style="position:absolute;right:442.1px;top:308.41px;font:bold 6px/6px 'Liberation Sans',sans-serif;color:#1a1a1a;white-space:nowrap;transform:scaleX(0.92);transform-origin:100% 0;;-webkit-text-stroke:0.12px #1a1a1a">12,048</div>
<div style="position:absolute;right:387.0px;top:308.41px;font:bold 6px/6px 'Liberation Sans',sans-serif;color:#1a1a1a;white-space:nowrap;transform:scaleX(0.92);transform-origin:100% 0;;-webkit-text-stroke:0.12px #1a1a1a">44%</div>
<div style="position:absolute;right:327.30000000000007px;top:308.41px;font:bold 6px/6px 'Liberation Sans',sans-serif;color:#1a1a1a;white-space:nowrap;transform:scaleX(0.92);transform-origin:100% 0;;-webkit-text-stroke:0.12px #1a1a1a">$379,129</div>
<div style="position:absolute;right:267.70000000000005px;top:308.41px;font:bold 6px/6px 'Liberation Sans',sans-serif;color:#1a1a1a;white-space:nowrap;transform:scaleX(0.92);transform-origin:100% 0;;-webkit-text-stroke:0.12px #1a1a1a">$400,790</div>
<div style="position:absolute;right:214.60000000000002px;top:308.41px;font:bold 6px/6px 'Liberation Sans',sans-serif;color:#1a1a1a;white-space:nowrap;transform:scaleX(0.92);transform-origin:100% 0;;-webkit-text-stroke:0.12px #1a1a1a">6%</div>
<div style="position:absolute;right:161.0px;top:308.41px;font:bold 6px/6px 'Liberation Sans',sans-serif;color:#1a1a1a;white-space:nowrap;transform:scaleX(0.92);transform-origin:100% 0;;-webkit-text-stroke:0.12px #1a1a1a">84,040</div>
<div style="position:absolute;right:107.60000000000002px;top:308.41px;font:bold 6px/6px 'Liberation Sans',sans-serif;color:#1a1a1a;white-space:nowrap;transform:scaleX(0.92);transform-origin:100% 0;;-webkit-text-stroke:0.12px #1a1a1a">87,718</div>
<div style="position:absolute;right:72.39999999999998px;top:308.41px;font:bold 6px/6px 'Liberation Sans',sans-serif;color:#1a1a1a;white-space:nowrap;transform:scaleX(0.92);transform-origin:100% 0;;-webkit-text-stroke:0.12px #1a1a1a">4%</div>
<div style="position:absolute;right:28.100000000000023px;top:308.41px;font:bold 6px/6px 'Liberation Sans',sans-serif;color:#1a1a1a;white-space:nowrap;transform:scaleX(0.92);transform-origin:100% 0;;-webkit-text-stroke:0.12px #1a1a1a">7</div>
<svg style="position:absolute;left:124.3px;top:307.50px" width="6.6" height="6.6" viewBox="0 0 8 8"><circle cx="4" cy="4" r="3.5" fill="none" stroke="#9a9a9a" stroke-width="0.8"/><path d="M3.2,2.6 L5,4 L3.2,5.4 Z" fill="#888"/></svg>
<div style="position:absolute;left:133.3px;top:308.31px;font:normal 6px/6px 'Liberation Sans',sans-serif;color:#3c3c3c;white-space:nowrap;transform:scaleX(0.905);transform-origin:0 0;;-webkit-text-stroke:0.12px #3c3c3c">Elbow Total</div>
<div style="position:absolute;right:583.2px;top:319.76px;font:normal 6px/6px 'Liberation Sans',sans-serif;color:#444;white-space:nowrap;transform:scaleX(0.92);transform-origin:100% 0;;-webkit-text-stroke:0.12px #444">4,616</div>
<div style="position:absolute;right:530.8px;top:319.76px;font:normal 6px/6px 'Liberation Sans',sans-serif;color:#444;white-space:nowrap;transform:scaleX(0.92);transform-origin:100% 0;;-webkit-text-stroke:0.12px #444">4,566</div>
<div style="position:absolute;right:498.70000000000005px;top:319.76px;font:normal 6px/6px 'Liberation Sans',sans-serif;color:#ec2f2f;white-space:nowrap;transform:scaleX(0.92);transform-origin:100% 0;;-webkit-text-stroke:0.12px #ec2f2f">-1%</div>
<div style="position:absolute;right:442.1px;top:319.76px;font:normal 6px/6px 'Liberation Sans',sans-serif;color:#444;white-space:nowrap;transform:scaleX(0.92);transform-origin:100% 0;;-webkit-text-stroke:0.12px #444">4,566</div>
<div style="position:absolute;right:387.0px;top:319.76px;font:normal 6px/6px 'Liberation Sans',sans-serif;color:#444;white-space:nowrap;transform:scaleX(0.92);transform-origin:100% 0;;-webkit-text-stroke:0.12px #444">38%</div>
<div style="position:absolute;right:327.30000000000007px;top:319.76px;font:normal 6px/6px 'Liberation Sans',sans-serif;color:#444;white-space:nowrap;transform:scaleX(0.92);transform-origin:100% 0;;-webkit-text-stroke:0.12px #444">$126,287</div>
<div style="position:absolute;right:267.70000000000005px;top:319.76px;font:normal 6px/6px 'Liberation Sans',sans-serif;color:#444;white-space:nowrap;transform:scaleX(0.92);transform-origin:100% 0;;-webkit-text-stroke:0.12px #444">$133,691</div>
<div style="position:absolute;right:214.60000000000002px;top:319.76px;font:normal 6px/6px 'Liberation Sans',sans-serif;color:#444;white-space:nowrap;transform:scaleX(0.92);transform-origin:100% 0;;-webkit-text-stroke:0.12px #444">6%</div>
<div style="position:absolute;right:161.0px;top:319.76px;font:normal 6px/6px 'Liberation Sans',sans-serif;color:#444;white-space:nowrap;transform:scaleX(0.92);transform-origin:100% 0;;-webkit-text-stroke:0.12px #444">29,692</div>
<div style="position:absolute;right:107.60000000000002px;top:319.76px;font:normal 6px/6px 'Liberation Sans',sans-serif;color:#444;white-space:nowrap;transform:scaleX(0.92);transform-origin:100% 0;;-webkit-text-stroke:0.12px #444">31,596</div>
<div style="position:absolute;right:72.39999999999998px;top:319.76px;font:normal 6px/6px 'Liberation Sans',sans-serif;color:#444;white-space:nowrap;transform:scaleX(0.92);transform-origin:100% 0;;-webkit-text-stroke:0.12px #444">6%</div>
<div style="position:absolute;right:28.100000000000023px;top:319.76px;font:normal 6px/6px 'Liberation Sans',sans-serif;color:#444;white-space:nowrap;transform:scaleX(0.92);transform-origin:100% 0;;-webkit-text-stroke:0.12px #444">7</div>
<svg style="position:absolute;left:180.2px;top:318.85px" width="6.6" height="6.6" viewBox="0 0 8 8"><circle cx="4" cy="4" r="3.5" fill="none" stroke="#9a9a9a" stroke-width="0.8"/><path d="M3.2,2.6 L5,4 L3.2,5.4 Z" fill="#888"/></svg>
<div style="position:absolute;left:189px;top:319.66px;font:normal 6px/6px 'Liberation Sans',sans-serif;color:#3c3c3c;white-space:nowrap;transform:scaleX(0.905);transform-origin:0 0;;-webkit-text-stroke:0.12px #3c3c3c">Electrical Non metallic Tubing 25MM 20FT</div>
<div style="position:absolute;left:297.5px;top:319.61px;font:normal 6px/6px 'Liberation Sans',sans-serif;color:#3c3c3c;white-space:nowrap;transform:scaleX(0.92);transform-origin:0 0;;-webkit-text-stroke:0.12px #3c3c3c">309010</div>
<div style="position:absolute;right:583.2px;top:331.06px;font:normal 6px/6px 'Liberation Sans',sans-serif;color:#444;white-space:nowrap;transform:scaleX(0.92);transform-origin:100% 0;;-webkit-text-stroke:0.12px #444">4,218</div>
<div style="position:absolute;right:530.8px;top:331.06px;font:normal 6px/6px 'Liberation Sans',sans-serif;color:#444;white-space:nowrap;transform:scaleX(0.92);transform-origin:100% 0;;-webkit-text-stroke:0.12px #444">4,260</div>
<div style="position:absolute;right:498.70000000000005px;top:331.06px;font:normal 6px/6px 'Liberation Sans',sans-serif;color:#444;white-space:nowrap;transform:scaleX(0.92);transform-origin:100% 0;;-webkit-text-stroke:0.12px #444">1%</div>
<div style="position:absolute;right:442.1px;top:331.06px;font:normal 6px/6px 'Liberation Sans',sans-serif;color:#444;white-space:nowrap;transform:scaleX(0.92);transform-origin:100% 0;;-webkit-text-stroke:0.12px #444">4,260</div>
<div style="position:absolute;right:387.0px;top:331.06px;font:normal 6px/6px 'Liberation Sans',sans-serif;color:#444;white-space:nowrap;transform:scaleX(0.92);transform-origin:100% 0;;-webkit-text-stroke:0.12px #444">35%</div>
<div style="position:absolute;right:327.30000000000007px;top:331.06px;font:normal 6px/6px 'Liberation Sans',sans-serif;color:#444;white-space:nowrap;transform:scaleX(0.92);transform-origin:100% 0;;-webkit-text-stroke:0.12px #444">$153,140</div>
<div style="position:absolute;right:267.70000000000005px;top:331.06px;font:normal 6px/6px 'Liberation Sans',sans-serif;color:#444;white-space:nowrap;transform:scaleX(0.92);transform-origin:100% 0;;-webkit-text-stroke:0.12px #444">$159,885</div>
<div style="position:absolute;right:214.60000000000002px;top:331.06px;font:normal 6px/6px 'Liberation Sans',sans-serif;color:#444;white-space:nowrap;transform:scaleX(0.92);transform-origin:100% 0;;-webkit-text-stroke:0.12px #444">4%</div>
<div style="position:absolute;right:161.0px;top:331.06px;font:normal 6px/6px 'Liberation Sans',sans-serif;color:#444;white-space:nowrap;transform:scaleX(0.92);transform-origin:100% 0;;-webkit-text-stroke:0.12px #444">31,007</div>
<div style="position:absolute;right:107.60000000000002px;top:331.06px;font:normal 6px/6px 'Liberation Sans',sans-serif;color:#444;white-space:nowrap;transform:scaleX(0.92);transform-origin:100% 0;;-webkit-text-stroke:0.12px #444">32,078</div>
<div style="position:absolute;right:72.39999999999998px;top:331.06px;font:normal 6px/6px 'Liberation Sans',sans-serif;color:#444;white-space:nowrap;transform:scaleX(0.92);transform-origin:100% 0;;-webkit-text-stroke:0.12px #444">3%</div>
<div style="position:absolute;right:28.100000000000023px;top:331.06px;font:normal 6px/6px 'Liberation Sans',sans-serif;color:#444;white-space:nowrap;transform:scaleX(0.92);transform-origin:100% 0;;-webkit-text-stroke:0.12px #444">8</div>
<svg style="position:absolute;left:180.2px;top:330.15px" width="6.6" height="6.6" viewBox="0 0 8 8"><circle cx="4" cy="4" r="3.5" fill="none" stroke="#9a9a9a" stroke-width="0.8"/><path d="M3.2,2.6 L5,4 L3.2,5.4 Z" fill="#888"/></svg>
<div style="position:absolute;left:189px;top:330.96px;font:normal 6px/6px 'Liberation Sans',sans-serif;color:#3c3c3c;white-space:nowrap;transform:scaleX(0.905);transform-origin:0 0;;-webkit-text-stroke:0.12px #3c3c3c">Electrical Non metallic Tubing 50MM 20FT</div>
<div style="position:absolute;left:297.5px;top:330.91px;font:normal 6px/6px 'Liberation Sans',sans-serif;color:#3c3c3c;white-space:nowrap;transform:scaleX(0.92);transform-origin:0 0;;-webkit-text-stroke:0.12px #3c3c3c">561538</div>
<div style="position:absolute;right:583.2px;top:342.36px;font:normal 6px/6px 'Liberation Sans',sans-serif;color:#444;white-space:nowrap;transform:scaleX(0.92);transform-origin:100% 0;;-webkit-text-stroke:0.12px #444">1,474</div>
<div style="position:absolute;right:530.8px;top:342.36px;font:normal 6px/6px 'Liberation Sans',sans-serif;color:#444;white-space:nowrap;transform:scaleX(0.92);transform-origin:100% 0;;-webkit-text-stroke:0.12px #444">1,518</div>
<div style="position:absolute;right:498.70000000000005px;top:342.36px;font:normal 6px/6px 'Liberation Sans',sans-serif;color:#444;white-space:nowrap;transform:scaleX(0.92);transform-origin:100% 0;;-webkit-text-stroke:0.12px #444">3%</div>
<div style="position:absolute;right:442.1px;top:342.36px;font:normal 6px/6px 'Liberation Sans',sans-serif;color:#444;white-space:nowrap;transform:scaleX(0.92);transform-origin:100% 0;;-webkit-text-stroke:0.12px #444">1,518</div>
<div style="position:absolute;right:387.0px;top:342.36px;font:normal 6px/6px 'Liberation Sans',sans-serif;color:#444;white-space:nowrap;transform:scaleX(0.92);transform-origin:100% 0;;-webkit-text-stroke:0.12px #444">13%</div>
<div style="position:absolute;right:327.30000000000007px;top:342.36px;font:normal 6px/6px 'Liberation Sans',sans-serif;color:#444;white-space:nowrap;transform:scaleX(0.92);transform-origin:100% 0;;-webkit-text-stroke:0.12px #444">$42,398</div>
<div style="position:absolute;right:267.70000000000005px;top:342.36px;font:normal 6px/6px 'Liberation Sans',sans-serif;color:#444;white-space:nowrap;transform:scaleX(0.92);transform-origin:100% 0;;-webkit-text-stroke:0.12px #444">$47,471</div>
<div style="position:absolute;right:214.60000000000002px;top:342.36px;font:normal 6px/6px 'Liberation Sans',sans-serif;color:#444;white-space:nowrap;transform:scaleX(0.92);transform-origin:100% 0;;-webkit-text-stroke:0.12px #444">12%</div>
<div style="position:absolute;right:161.0px;top:342.36px;font:normal 6px/6px 'Liberation Sans',sans-serif;color:#444;white-space:nowrap;transform:scaleX(0.92);transform-origin:100% 0;;-webkit-text-stroke:0.12px #444">11,596</div>
<div style="position:absolute;right:107.60000000000002px;top:342.36px;font:normal 6px/6px 'Liberation Sans',sans-serif;color:#444;white-space:nowrap;transform:scaleX(0.92);transform-origin:100% 0;;-webkit-text-stroke:0.12px #444">12,011</div>
<div style="position:absolute;right:72.39999999999998px;top:342.36px;font:normal 6px/6px 'Liberation Sans',sans-serif;color:#444;white-space:nowrap;transform:scaleX(0.92);transform-origin:100% 0;;-webkit-text-stroke:0.12px #444">4%</div>
<div style="position:absolute;right:28.100000000000023px;top:342.36px;font:normal 6px/6px 'Liberation Sans',sans-serif;color:#444;white-space:nowrap;transform:scaleX(0.92);transform-origin:100% 0;;-webkit-text-stroke:0.12px #444">8</div>
<svg style="position:absolute;left:180.2px;top:341.45px" width="6.6" height="6.6" viewBox="0 0 8 8"><circle cx="4" cy="4" r="3.5" fill="none" stroke="#9a9a9a" stroke-width="0.8"/><path d="M3.2,2.6 L5,4 L3.2,5.4 Z" fill="#888"/></svg>
<div style="position:absolute;left:189px;top:342.26px;font:normal 6px/6px 'Liberation Sans',sans-serif;color:#3c3c3c;white-space:nowrap;transform:scaleX(0.905);transform-origin:0 0;;-webkit-text-stroke:0.12px #3c3c3c">Rigid PVC Conduit 20MM</div>
<div style="position:absolute;left:297.5px;top:342.21px;font:normal 6px/6px 'Liberation Sans',sans-serif;color:#3c3c3c;white-space:nowrap;transform:scaleX(0.92);transform-origin:0 0;;-webkit-text-stroke:0.12px #3c3c3c">1000005503</div>
<div style="position:absolute;right:583.2px;top:353.71px;font:normal 6px/6px 'Liberation Sans',sans-serif;color:#444;white-space:nowrap;transform:scaleX(0.92);transform-origin:100% 0;;-webkit-text-stroke:0.12px #444">880</div>
<div style="position:absolute;right:530.8px;top:353.71px;font:normal 6px/6px 'Liberation Sans',sans-serif;color:#444;white-space:nowrap;transform:scaleX(0.92);transform-origin:100% 0;;-webkit-text-stroke:0.12px #444">790</div>
<div style="position:absolute;right:498.70000000000005px;top:353.71px;font:normal 6px/6px 'Liberation Sans',sans-serif;color:#ec2f2f;white-space:nowrap;transform:scaleX(0.92);transform-origin:100% 0;;-webkit-text-stroke:0.12px #ec2f2f">-10%</div>
<div style="position:absolute;right:442.1px;top:353.71px;font:normal 6px/6px 'Liberation Sans',sans-serif;color:#444;white-space:nowrap;transform:scaleX(0.92);transform-origin:100% 0;;-webkit-text-stroke:0.12px #444">790</div>
<div style="position:absolute;right:387.0px;top:353.71px;font:normal 6px/6px 'Liberation Sans',sans-serif;color:#444;white-space:nowrap;transform:scaleX(0.92);transform-origin:100% 0;;-webkit-text-stroke:0.12px #444">7%</div>
<div style="position:absolute;right:327.30000000000007px;top:353.71px;font:normal 6px/6px 'Liberation Sans',sans-serif;color:#444;white-space:nowrap;transform:scaleX(0.92);transform-origin:100% 0;;-webkit-text-stroke:0.12px #444">$25,781</div>
<div style="position:absolute;right:267.70000000000005px;top:353.71px;font:normal 6px/6px 'Liberation Sans',sans-serif;color:#444;white-space:nowrap;transform:scaleX(0.92);transform-origin:100% 0;;-webkit-text-stroke:0.12px #444">$24,601</div>
<div style="position:absolute;right:214.60000000000002px;top:353.71px;font:normal 6px/6px 'Liberation Sans',sans-serif;color:#ec2f2f;white-space:nowrap;transform:scaleX(0.92);transform-origin:100% 0;;-webkit-text-stroke:0.12px #ec2f2f">-5%</div>
<div style="position:absolute;right:161.0px;top:353.71px;font:normal 6px/6px 'Liberation Sans',sans-serif;color:#444;white-space:nowrap;transform:scaleX(0.92);transform-origin:100% 0;;-webkit-text-stroke:0.12px #444">4,854</div>
<div style="position:absolute;right:107.60000000000002px;top:353.71px;font:normal 6px/6px 'Liberation Sans',sans-serif;color:#444;white-space:nowrap;transform:scaleX(0.92);transform-origin:100% 0;;-webkit-text-stroke:0.12px #444">4,987</div>
<div style="position:absolute;right:72.39999999999998px;top:353.71px;font:normal 6px/6px 'Liberation Sans',sans-serif;color:#444;white-space:nowrap;transform:scaleX(0.92);transform-origin:100% 0;;-webkit-text-stroke:0.12px #444">3%</div>
<div style="position:absolute;right:28.100000000000023px;top:353.71px;font:normal 6px/6px 'Liberation Sans',sans-serif;color:#444;white-space:nowrap;transform:scaleX(0.92);transform-origin:100% 0;;-webkit-text-stroke:0.12px #444">6</div>
<svg style="position:absolute;left:180.2px;top:352.80px" width="6.6" height="6.6" viewBox="0 0 8 8"><circle cx="4" cy="4" r="3.5" fill="none" stroke="#9a9a9a" stroke-width="0.8"/><path d="M3.2,2.6 L5,4 L3.2,5.4 Z" fill="#888"/></svg>
<div style="position:absolute;left:189px;top:353.61px;font:normal 6px/6px 'Liberation Sans',sans-serif;color:#3c3c3c;white-space:nowrap;transform:scaleX(0.905);transform-origin:0 0;;-webkit-text-stroke:0.12px #3c3c3c">Electrical Non metallic Tubing 40MM</div>
<div style="position:absolute;left:297.5px;top:353.56px;font:normal 6px/6px 'Liberation Sans',sans-serif;color:#3c3c3c;white-space:nowrap;transform:scaleX(0.92);transform-origin:0 0;;-webkit-text-stroke:0.12px #3c3c3c">985258</div>
<div style="position:absolute;right:583.2px;top:365.16px;font:normal 6px/6px 'Liberation Sans',sans-serif;color:#444;white-space:nowrap;transform:scaleX(0.92);transform-origin:100% 0;;-webkit-text-stroke:0.12px #444">478</div>
<div style="position:absolute;right:530.8px;top:365.16px;font:normal 6px/6px 'Liberation Sans',sans-serif;color:#444;white-space:nowrap;transform:scaleX(0.92);transform-origin:100% 0;;-webkit-text-stroke:0.12px #444">490</div>
<div style="position:absolute;right:498.70000000000005px;top:365.16px;font:normal 6px/6px 'Liberation Sans',sans-serif;color:#444;white-space:nowrap;transform:scaleX(0.92);transform-origin:100% 0;;-webkit-text-stroke:0.12px #444">3%</div>
<div style="position:absolute;right:442.1px;top:365.16px;font:normal 6px/6px 'Liberation Sans',sans-serif;color:#444;white-space:nowrap;transform:scaleX(0.92);transform-origin:100% 0;;-webkit-text-stroke:0.12px #444">490</div>
<div style="position:absolute;right:387.0px;top:365.16px;font:normal 6px/6px 'Liberation Sans',sans-serif;color:#444;white-space:nowrap;transform:scaleX(0.92);transform-origin:100% 0;;-webkit-text-stroke:0.12px #444">4%</div>
<div style="position:absolute;right:327.30000000000007px;top:365.16px;font:normal 6px/6px 'Liberation Sans',sans-serif;color:#444;white-space:nowrap;transform:scaleX(0.92);transform-origin:100% 0;;-webkit-text-stroke:0.12px #444">$13,160</div>
<div style="position:absolute;right:267.70000000000005px;top:365.16px;font:normal 6px/6px 'Liberation Sans',sans-serif;color:#444;white-space:nowrap;transform:scaleX(0.92);transform-origin:100% 0;;-webkit-text-stroke:0.12px #444">$15,243</div>
<div style="position:absolute;right:214.60000000000002px;top:365.16px;font:normal 6px/6px 'Liberation Sans',sans-serif;color:#444;white-space:nowrap;transform:scaleX(0.92);transform-origin:100% 0;;-webkit-text-stroke:0.12px #444">16%</div>
<div style="position:absolute;right:161.0px;top:365.16px;font:normal 6px/6px 'Liberation Sans',sans-serif;color:#444;white-space:nowrap;transform:scaleX(0.92);transform-origin:100% 0;;-webkit-text-stroke:0.12px #444">4,572</div>
<div style="position:absolute;right:107.60000000000002px;top:365.16px;font:normal 6px/6px 'Liberation Sans',sans-serif;color:#444;white-space:nowrap;transform:scaleX(0.92);transform-origin:100% 0;;-webkit-text-stroke:0.12px #444">4,689</div>
<div style="position:absolute;right:72.39999999999998px;top:365.16px;font:normal 6px/6px 'Liberation Sans',sans-serif;color:#444;white-space:nowrap;transform:scaleX(0.92);transform-origin:100% 0;;-webkit-text-stroke:0.12px #444">3%</div>
<div style="position:absolute;right:28.100000000000023px;top:365.16px;font:normal 6px/6px 'Liberation Sans',sans-serif;color:#444;white-space:nowrap;transform:scaleX(0.92);transform-origin:100% 0;;-webkit-text-stroke:0.12px #444">10</div>
<svg style="position:absolute;left:180.2px;top:364.25px" width="6.6" height="6.6" viewBox="0 0 8 8"><circle cx="4" cy="4" r="3.5" fill="none" stroke="#9a9a9a" stroke-width="0.8"/><path d="M3.2,2.6 L5,4 L3.2,5.4 Z" fill="#888"/></svg>
<div style="position:absolute;left:189px;top:365.06px;font:normal 6px/6px 'Liberation Sans',sans-serif;color:#3c3c3c;white-space:nowrap;transform:scaleX(0.905);transform-origin:0 0;;-webkit-text-stroke:0.12px #3c3c3c">Rigid PVC Conduit 25MM</div>
<div style="position:absolute;left:297.5px;top:365.01px;font:normal 6px/6px 'Liberation Sans',sans-serif;color:#3c3c3c;white-space:nowrap;transform:scaleX(0.92);transform-origin:0 0;;-webkit-text-stroke:0.12px #3c3c3c">1000012342</div>
<div style="position:absolute;right:583.2px;top:376.76px;font:normal 6px/6px 'Liberation Sans',sans-serif;color:#444;white-space:nowrap;transform:scaleX(0.92);transform-origin:100% 0;;-webkit-text-stroke:0.12px #444">324</div>
<div style="position:absolute;right:530.8px;top:376.76px;font:normal 6px/6px 'Liberation Sans',sans-serif;color:#444;white-space:nowrap;transform:scaleX(0.92);transform-origin:100% 0;;-webkit-text-stroke:0.12px #444">332</div>
<div style="position:absolute;right:498.70000000000005px;top:376.76px;font:normal 6px/6px 'Liberation Sans',sans-serif;color:#444;white-space:nowrap;transform:scaleX(0.92);transform-origin:100% 0;;-webkit-text-stroke:0.12px #444">2%</div>
<div style="position:absolute;right:442.1px;top:376.76px;font:normal 6px/6px 'Liberation Sans',sans-serif;color:#444;white-space:nowrap;transform:scaleX(0.92);transform-origin:100% 0;;-webkit-text-stroke:0.12px #444">332</div>
<div style="position:absolute;right:387.0px;top:376.76px;font:normal 6px/6px 'Liberation Sans',sans-serif;color:#444;white-space:nowrap;transform:scaleX(0.92);transform-origin:100% 0;;-webkit-text-stroke:0.12px #444">3%</div>
<div style="position:absolute;right:327.30000000000007px;top:376.76px;font:normal 6px/6px 'Liberation Sans',sans-serif;color:#444;white-space:nowrap;transform:scaleX(0.92);transform-origin:100% 0;;-webkit-text-stroke:0.12px #444">$15,742</div>
<div style="position:absolute;right:267.70000000000005px;top:376.76px;font:normal 6px/6px 'Liberation Sans',sans-serif;color:#444;white-space:nowrap;transform:scaleX(0.92);transform-origin:100% 0;;-webkit-text-stroke:0.12px #444">$16,126</div>
<div style="position:absolute;right:214.60000000000002px;top:376.76px;font:normal 6px/6px 'Liberation Sans',sans-serif;color:#444;white-space:nowrap;transform:scaleX(0.92);transform-origin:100% 0;;-webkit-text-stroke:0.12px #444">2%</div>
<div style="position:absolute;right:161.0px;top:376.76px;font:normal 6px/6px 'Liberation Sans',sans-serif;color:#444;white-space:nowrap;transform:scaleX(0.92);transform-origin:100% 0;;-webkit-text-stroke:0.12px #444">1,985</div>
<div style="position:absolute;right:107.60000000000002px;top:376.76px;font:normal 6px/6px 'Liberation Sans',sans-serif;color:#444;white-space:nowrap;transform:scaleX(0.92);transform-origin:100% 0;;-webkit-text-stroke:0.12px #444">2,024</div>
<div style="position:absolute;right:72.39999999999998px;top:376.76px;font:normal 6px/6px 'Liberation Sans',sans-serif;color:#444;white-space:nowrap;transform:scaleX(0.92);transform-origin:100% 0;;-webkit-text-stroke:0.12px #444">2%</div>
<div style="position:absolute;right:28.100000000000023px;top:376.76px;font:normal 6px/6px 'Liberation Sans',sans-serif;color:#444;white-space:nowrap;transform:scaleX(0.92);transform-origin:100% 0;;-webkit-text-stroke:0.12px #444">6</div>
<svg style="position:absolute;left:180.2px;top:375.85px" width="6.6" height="6.6" viewBox="0 0 8 8"><circle cx="4" cy="4" r="3.5" fill="none" stroke="#9a9a9a" stroke-width="0.8"/><path d="M3.2,2.6 L5,4 L3.2,5.4 Z" fill="#888"/></svg>
<div style="position:absolute;left:189px;top:376.66px;font:normal 6px/6px 'Liberation Sans',sans-serif;color:#3c3c3c;white-space:nowrap;transform:scaleX(0.905);transform-origin:0 0;;-webkit-text-stroke:0.12px #3c3c3c">Rigid PVC Conduit 15MM</div>
<div style="position:absolute;left:297.5px;top:376.61px;font:normal 6px/6px 'Liberation Sans',sans-serif;color:#3c3c3c;white-space:nowrap;transform:scaleX(0.92);transform-origin:0 0;;-webkit-text-stroke:0.12px #3c3c3c">1001472301</div>
<div style="position:absolute;right:583.2px;top:388.41px;font:normal 6px/6px 'Liberation Sans',sans-serif;color:#444;white-space:nowrap;transform:scaleX(0.92);transform-origin:100% 0;;-webkit-text-stroke:0.12px #444">30</div>
<div style="position:absolute;right:530.8px;top:388.41px;font:normal 6px/6px 'Liberation Sans',sans-serif;color:#444;white-space:nowrap;transform:scaleX(0.92);transform-origin:100% 0;;-webkit-text-stroke:0.12px #444">38</div>
<div style="position:absolute;right:498.70000000000005px;top:388.41px;font:normal 6px/6px 'Liberation Sans',sans-serif;color:#444;white-space:nowrap;transform:scaleX(0.92);transform-origin:100% 0;;-webkit-text-stroke:0.12px #444">27%</div>
<div style="position:absolute;right:442.1px;top:388.41px;font:normal 6px/6px 'Liberation Sans',sans-serif;color:#444;white-space:nowrap;transform:scaleX(0.92);transform-origin:100% 0;;-webkit-text-stroke:0.12px #444">38</div>
<div style="position:absolute;right:387.0px;top:388.41px;font:normal 6px/6px 'Liberation Sans',sans-serif;color:#444;white-space:nowrap;transform:scaleX(0.92);transform-origin:100% 0;;-webkit-text-stroke:0.12px #444">0%</div>
<div style="position:absolute;right:327.30000000000007px;top:388.41px;font:normal 6px/6px 'Liberation Sans',sans-serif;color:#444;white-space:nowrap;transform:scaleX(0.92);transform-origin:100% 0;;-webkit-text-stroke:0.12px #444">$927</div>
<div style="position:absolute;right:267.70000000000005px;top:388.41px;font:normal 6px/6px 'Liberation Sans',sans-serif;color:#444;white-space:nowrap;transform:scaleX(0.92);transform-origin:100% 0;;-webkit-text-stroke:0.12px #444">$1,021</div>
<div style="position:absolute;right:214.60000000000002px;top:388.41px;font:normal 6px/6px 'Liberation Sans',sans-serif;color:#444;white-space:nowrap;transform:scaleX(0.92);transform-origin:100% 0;;-webkit-text-stroke:0.12px #444">10%</div>
<div style="position:absolute;right:161.0px;top:388.41px;font:normal 6px/6px 'Liberation Sans',sans-serif;color:#444;white-space:nowrap;transform:scaleX(0.92);transform-origin:100% 0;;-webkit-text-stroke:0.12px #444">0</div>
<div style="position:absolute;right:107.60000000000002px;top:388.41px;font:normal 6px/6px 'Liberation Sans',sans-serif;color:#444;white-space:nowrap;transform:scaleX(0.92);transform-origin:100% 0;;-webkit-text-stroke:0.12px #444">0</div>
<div style="position:absolute;right:72.39999999999998px;top:388.41px;font:normal 6px/6px 'Liberation Sans',sans-serif;color:#444;white-space:nowrap;transform:scaleX(0.92);transform-origin:100% 0;;-webkit-text-stroke:0.12px #444">0%</div>
<div style="position:absolute;right:28.100000000000023px;top:388.41px;font:normal 6px/6px 'Liberation Sans',sans-serif;color:#444;white-space:nowrap;transform:scaleX(0.92);transform-origin:100% 0;;-webkit-text-stroke:0.12px #444">0</div>
<svg style="position:absolute;left:180.2px;top:387.50px" width="6.6" height="6.6" viewBox="0 0 8 8"><circle cx="4" cy="4" r="3.5" fill="none" stroke="#9a9a9a" stroke-width="0.8"/><path d="M3.2,2.6 L5,4 L3.2,5.4 Z" fill="#888"/></svg>
<div style="position:absolute;left:189px;top:388.31px;font:normal 6px/6px 'Liberation Sans',sans-serif;color:#3c3c3c;white-space:nowrap;transform:scaleX(0.905);transform-origin:0 0;;-webkit-text-stroke:0.12px #3c3c3c">Rigid PVC Conduit 25MM 10FT</div>
<div style="position:absolute;left:297.5px;top:388.26px;font:normal 6px/6px 'Liberation Sans',sans-serif;color:#3c3c3c;white-space:nowrap;transform:scaleX(0.92);transform-origin:0 0;;-webkit-text-stroke:0.12px #3c3c3c">1000524747</div>
<div style="position:absolute;right:583.2px;top:399.86px;font:normal 6px/6px 'Liberation Sans',sans-serif;color:#444;white-space:nowrap;transform:scaleX(0.92);transform-origin:100% 0;;-webkit-text-stroke:0.12px #444">4</div>
<div style="position:absolute;right:530.8px;top:399.86px;font:normal 6px/6px 'Liberation Sans',sans-serif;color:#444;white-space:nowrap;transform:scaleX(0.92);transform-origin:100% 0;;-webkit-text-stroke:0.12px #444">19</div>
<div style="position:absolute;right:498.70000000000005px;top:399.86px;font:normal 6px/6px 'Liberation Sans',sans-serif;color:#444;white-space:nowrap;transform:scaleX(0.92);transform-origin:100% 0;;-webkit-text-stroke:0.12px #444">375%</div>
<div style="position:absolute;right:442.1px;top:399.86px;font:normal 6px/6px 'Liberation Sans',sans-serif;color:#444;white-space:nowrap;transform:scaleX(0.92);transform-origin:100% 0;;-webkit-text-stroke:0.12px #444">19</div>
<div style="position:absolute;right:387.0px;top:399.86px;font:normal 6px/6px 'Liberation Sans',sans-serif;color:#444;white-space:nowrap;transform:scaleX(0.92);transform-origin:100% 0;;-webkit-text-stroke:0.12px #444">0%</div>
<div style="position:absolute;right:327.30000000000007px;top:399.86px;font:normal 6px/6px 'Liberation Sans',sans-serif;color:#444;white-space:nowrap;transform:scaleX(0.92);transform-origin:100% 0;;-webkit-text-stroke:0.12px #444">$116</div>
<div style="position:absolute;right:267.70000000000005px;top:399.86px;font:normal 6px/6px 'Liberation Sans',sans-serif;color:#444;white-space:nowrap;transform:scaleX(0.92);transform-origin:100% 0;;-webkit-text-stroke:0.12px #444">$509</div>
<div style="position:absolute;right:214.60000000000002px;top:399.86px;font:normal 6px/6px 'Liberation Sans',sans-serif;color:#444;white-space:nowrap;transform:scaleX(0.92);transform-origin:100% 0;;-webkit-text-stroke:0.12px #444">338%</div>
<div style="position:absolute;right:161.0px;top:399.86px;font:normal 6px/6px 'Liberation Sans',sans-serif;color:#444;white-space:nowrap;transform:scaleX(0.92);transform-origin:100% 0;;-webkit-text-stroke:0.12px #444">0</div>
<div style="position:absolute;right:107.60000000000002px;top:399.86px;font:normal 6px/6px 'Liberation Sans',sans-serif;color:#444;white-space:nowrap;transform:scaleX(0.92);transform-origin:100% 0;;-webkit-text-stroke:0.12px #444">0</div>
<div style="position:absolute;right:72.39999999999998px;top:399.86px;font:normal 6px/6px 'Liberation Sans',sans-serif;color:#444;white-space:nowrap;transform:scaleX(0.92);transform-origin:100% 0;;-webkit-text-stroke:0.12px #444">0%</div>
<div style="position:absolute;right:28.100000000000023px;top:399.86px;font:normal 6px/6px 'Liberation Sans',sans-serif;color:#444;white-space:nowrap;transform:scaleX(0.92);transform-origin:100% 0;;-webkit-text-stroke:0.12px #444">0</div>
<svg style="position:absolute;left:180.2px;top:398.95px" width="6.6" height="6.6" viewBox="0 0 8 8"><circle cx="4" cy="4" r="3.5" fill="none" stroke="#9a9a9a" stroke-width="0.8"/><path d="M3.2,2.6 L5,4 L3.2,5.4 Z" fill="#888"/></svg>
<div style="position:absolute;left:189px;top:399.76px;font:normal 6px/6px 'Liberation Sans',sans-serif;color:#3c3c3c;white-space:nowrap;transform:scaleX(0.905);transform-origin:0 0;;-webkit-text-stroke:0.12px #3c3c3c">Rigid PVC Conduit 20MM 10FT</div>
<div style="position:absolute;left:297.5px;top:399.71px;font:normal 6px/6px 'Liberation Sans',sans-serif;color:#3c3c3c;white-space:nowrap;transform:scaleX(0.92);transform-origin:0 0;;-webkit-text-stroke:0.12px #3c3c3c">1000524493</div>
<div style="position:absolute;right:583.2px;top:411.06px;font:normal 6px/6px 'Liberation Sans',sans-serif;color:#444;white-space:nowrap;transform:scaleX(0.92);transform-origin:100% 0;;-webkit-text-stroke:0.12px #444">2</div>
<div style="position:absolute;right:530.8px;top:411.06px;font:normal 6px/6px 'Liberation Sans',sans-serif;color:#444;white-space:nowrap;transform:scaleX(0.92);transform-origin:100% 0;;-webkit-text-stroke:0.12px #444">17</div>
<div style="position:absolute;right:498.70000000000005px;top:411.06px;font:normal 6px/6px 'Liberation Sans',sans-serif;color:#444;white-space:nowrap;transform:scaleX(0.92);transform-origin:100% 0;;-webkit-text-stroke:0.12px #444">750%</div>
<div style="position:absolute;right:442.1px;top:411.06px;font:normal 6px/6px 'Liberation Sans',sans-serif;color:#444;white-space:nowrap;transform:scaleX(0.92);transform-origin:100% 0;;-webkit-text-stroke:0.12px #444">17</div>
<div style="position:absolute;right:387.0px;top:411.06px;font:normal 6px/6px 'Liberation Sans',sans-serif;color:#444;white-space:nowrap;transform:scaleX(0.92);transform-origin:100% 0;;-webkit-text-stroke:0.12px #444">0%</div>
<div style="position:absolute;right:327.30000000000007px;top:411.06px;font:normal 6px/6px 'Liberation Sans',sans-serif;color:#444;white-space:nowrap;transform:scaleX(0.92);transform-origin:100% 0;;-webkit-text-stroke:0.12px #444">$68</div>
<div style="position:absolute;right:267.70000000000005px;top:411.06px;font:normal 6px/6px 'Liberation Sans',sans-serif;color:#444;white-space:nowrap;transform:scaleX(0.92);transform-origin:100% 0;;-webkit-text-stroke:0.12px #444">$602</div>
<div style="position:absolute;right:214.60000000000002px;top:411.06px;font:normal 6px/6px 'Liberation Sans',sans-serif;color:#444;white-space:nowrap;transform:scaleX(0.92);transform-origin:100% 0;;-webkit-text-stroke:0.12px #444">791%</div>
<div style="position:absolute;right:161.0px;top:411.06px;font:normal 6px/6px 'Liberation Sans',sans-serif;color:#444;white-space:nowrap;transform:scaleX(0.92);transform-origin:100% 0;;-webkit-text-stroke:0.12px #444">4</div>
<div style="position:absolute;right:107.60000000000002px;top:411.06px;font:normal 6px/6px 'Liberation Sans',sans-serif;color:#444;white-space:nowrap;transform:scaleX(0.92);transform-origin:100% 0;;-webkit-text-stroke:0.12px #444">4</div>
<div style="position:absolute;right:72.39999999999998px;top:411.06px;font:normal 6px/6px 'Liberation Sans',sans-serif;color:#444;white-space:nowrap;transform:scaleX(0.92);transform-origin:100% 0;;-webkit-text-stroke:0.12px #444">0%</div>
<div style="position:absolute;right:28.100000000000023px;top:411.06px;font:normal 6px/6px 'Liberation Sans',sans-serif;color:#444;white-space:nowrap;transform:scaleX(0.92);transform-origin:100% 0;;-webkit-text-stroke:0.12px #444">0</div>
<svg style="position:absolute;left:180.2px;top:410.15px" width="6.6" height="6.6" viewBox="0 0 8 8"><circle cx="4" cy="4" r="3.5" fill="none" stroke="#9a9a9a" stroke-width="0.8"/><path d="M3.2,2.6 L5,4 L3.2,5.4 Z" fill="#888"/></svg>
<div style="position:absolute;left:189px;top:410.96px;font:normal 6px/6px 'Liberation Sans',sans-serif;color:#3c3c3c;white-space:nowrap;transform:scaleX(0.905);transform-origin:0 0;;-webkit-text-stroke:0.12px #3c3c3c">Rigid PVC Conduit 40MM</div>
<div style="position:absolute;left:297.5px;top:410.91px;font:normal 6px/6px 'Liberation Sans',sans-serif;color:#3c3c3c;white-space:nowrap;transform:scaleX(0.92);transform-origin:0 0;;-webkit-text-stroke:0.12px #3c3c3c">1000524139</div>
<div style="position:absolute;right:583.2px;top:422.16px;font:normal 6px/6px 'Liberation Sans',sans-serif;color:#444;white-space:nowrap;transform:scaleX(0.92);transform-origin:100% 0;;-webkit-text-stroke:0.12px #444">10</div>
<div style="position:absolute;right:530.8px;top:422.16px;font:normal 6px/6px 'Liberation Sans',sans-serif;color:#444;white-space:nowrap;transform:scaleX(0.92);transform-origin:100% 0;;-webkit-text-stroke:0.12px #444">10</div>
<div style="position:absolute;right:498.70000000000005px;top:422.16px;font:normal 6px/6px 'Liberation Sans',sans-serif;color:#444;white-space:nowrap;transform:scaleX(0.92);transform-origin:100% 0;;-webkit-text-stroke:0.12px #444">0%</div>
<div style="position:absolute;right:442.1px;top:422.16px;font:normal 6px/6px 'Liberation Sans',sans-serif;color:#444;white-space:nowrap;transform:scaleX(0.92);transform-origin:100% 0;;-webkit-text-stroke:0.12px #444">10</div>
<div style="position:absolute;right:387.0px;top:422.16px;font:normal 6px/6px 'Liberation Sans',sans-serif;color:#444;white-space:nowrap;transform:scaleX(0.92);transform-origin:100% 0;;-webkit-text-stroke:0.12px #444">0%</div>
<div style="position:absolute;right:327.30000000000007px;top:422.16px;font:normal 6px/6px 'Liberation Sans',sans-serif;color:#444;white-space:nowrap;transform:scaleX(0.92);transform-origin:100% 0;;-webkit-text-stroke:0.12px #444">$1,286</div>
<div style="position:absolute;right:267.70000000000005px;top:422.16px;font:normal 6px/6px 'Liberation Sans',sans-serif;color:#444;white-space:nowrap;transform:scaleX(0.92);transform-origin:100% 0;;-webkit-text-stroke:0.12px #444">$1,277</div>
<div style="position:absolute;right:214.60000000000002px;top:422.16px;font:normal 6px/6px 'Liberation Sans',sans-serif;color:#ec2f2f;white-space:nowrap;transform:scaleX(0.92);transform-origin:100% 0;;-webkit-text-stroke:0.12px #ec2f2f">-1%</div>
<div style="position:absolute;right:161.0px;top:422.16px;font:normal 6px/6px 'Liberation Sans',sans-serif;color:#444;white-space:nowrap;transform:scaleX(0.92);transform-origin:100% 0;;-webkit-text-stroke:0.12px #444">1</div>
<div style="position:absolute;right:107.60000000000002px;top:422.16px;font:normal 6px/6px 'Liberation Sans',sans-serif;color:#444;white-space:nowrap;transform:scaleX(0.92);transform-origin:100% 0;;-webkit-text-stroke:0.12px #444">1</div>
<div style="position:absolute;right:72.39999999999998px;top:422.16px;font:normal 6px/6px 'Liberation Sans',sans-serif;color:#444;white-space:nowrap;transform:scaleX(0.92);transform-origin:100% 0;;-webkit-text-stroke:0.12px #444">0%</div>
<div style="position:absolute;right:28.100000000000023px;top:422.16px;font:normal 6px/6px 'Liberation Sans',sans-serif;color:#444;white-space:nowrap;transform:scaleX(0.92);transform-origin:100% 0;;-webkit-text-stroke:0.12px #444">0</div>
<svg style="position:absolute;left:180.2px;top:421.25px" width="6.6" height="6.6" viewBox="0 0 8 8"><circle cx="4" cy="4" r="3.5" fill="none" stroke="#9a9a9a" stroke-width="0.8"/><path d="M3.2,2.6 L5,4 L3.2,5.4 Z" fill="#888"/></svg>
<div style="position:absolute;left:189px;top:422.06px;font:normal 6px/6px 'Liberation Sans',sans-serif;color:#3c3c3c;white-space:nowrap;transform:scaleX(0.905);transform-origin:0 0;;-webkit-text-stroke:0.12px #3c3c3c">Rigid PVC Conduit 25MM 20FT</div>
<div style="position:absolute;left:297.5px;top:422.01px;font:normal 6px/6px 'Liberation Sans',sans-serif;color:#3c3c3c;white-space:nowrap;transform:scaleX(0.92);transform-origin:0 0;;-webkit-text-stroke:0.12px #3c3c3c">1000799278</div>
<div style="position:absolute;left:17.6px;top:200.7px;width:930.9px;height:1.0px;background:#c9cacd"></div>
<div style="position:absolute;left:17.6px;top:212.9px;width:930.9px;height:1.0px;background:#c9cacd"></div>
<div style="position:absolute;left:75.8px;top:224.9px;width:872.7px;height:1.0px;background:#c9cacd"></div>
<div style="position:absolute;left:121.5px;top:236.8px;width:827.0px;height:1.0px;background:#c9cacd"></div>
<div style="position:absolute;left:177.4px;top:247.9px;width:771.1px;height:1.0px;background:#dfe0e2"></div>
<div style="position:absolute;left:177.4px;top:259.6px;width:771.1px;height:1.0px;background:#dfe0e2"></div>
<div style="position:absolute;left:177.4px;top:271.0px;width:771.1px;height:1.0px;background:#dfe0e2"></div>
<div style="position:absolute;left:177.4px;top:282.3px;width:771.1px;height:1.0px;background:#dfe0e2"></div>
<div style="position:absolute;left:177.4px;top:293.6px;width:771.1px;height:1.0px;background:#dfe0e2"></div>
<div style="position:absolute;left:121.5px;top:304.9px;width:827.0px;height:1.0px;background:#c9cacd"></div>
<div style="position:absolute;left:121.5px;top:316.3px;width:827.0px;height:1.0px;background:#c9cacd"></div>
<div style="position:absolute;left:177.4px;top:327.6px;width:771.1px;height:1.0px;background:#dfe0e2"></div>
<div style="position:absolute;left:177.4px;top:338.9px;width:771.1px;height:1.0px;background:#dfe0e2"></div>
<div style="position:absolute;left:177.4px;top:350.2px;width:771.1px;height:1.0px;background:#dfe0e2"></div>
<div style="position:absolute;left:177.4px;top:361.6px;width:771.1px;height:1.0px;background:#dfe0e2"></div>
<div style="position:absolute;left:177.4px;top:373.1px;width:771.1px;height:1.0px;background:#dfe0e2"></div>
<div style="position:absolute;left:177.4px;top:384.8px;width:771.1px;height:1.0px;background:#dfe0e2"></div>
<div style="position:absolute;left:177.4px;top:396.4px;width:771.1px;height:1.0px;background:#dfe0e2"></div>
<div style="position:absolute;left:177.4px;top:407.7px;width:771.1px;height:1.0px;background:#dfe0e2"></div>
<div style="position:absolute;left:177.4px;top:418.8px;width:771.1px;height:1.0px;background:#dfe0e2"></div>
<div style="position:absolute;left:17.6px;top:429.9px;width:930.9px;height:1.0px;background:#dfe0e2"></div>
<div style="position:absolute;left:75.3px;top:213.4px;width:1.0px;height:217.0px;background:#dfe0e2"></div>
<div style="position:absolute;left:121.0px;top:225.4px;width:1.0px;height:205.0px;background:#dfe0e2"></div>
<div style="position:absolute;left:176.9px;top:237.3px;width:1.0px;height:68.1px;background:#dfe0e2"></div>
<div style="position:absolute;left:176.9px;top:316.8px;width:1.0px;height:113.6px;background:#dfe0e2"></div>
<div style="position:absolute;left:294.3px;top:237.3px;width:1.0px;height:68.1px;background:#dfe0e2"></div>
<div style="position:absolute;left:294.3px;top:316.8px;width:1.0px;height:113.6px;background:#dfe0e2"></div>
<div style="position:absolute;left:21px;top:319.06px;font:normal 6px/6px 'Liberation Sans',sans-serif;color:#3c3c3c;white-space:nowrap;transform:scaleX(0.905);transform-origin:0 0;;-webkit-text-stroke:0.12px #3c3c3c">Home Depot</div>
<div style="position:absolute;left:79.2px;top:325.16px;font:normal 6px/6px 'Liberation Sans',sans-serif;color:#3c3c3c;white-space:nowrap;transform:scaleX(0.905);transform-origin:0 0;;-webkit-text-stroke:0.12px #3c3c3c">PVC Piping</div>
<div style="position:absolute;left:125px;top:268.56px;font:normal 6px/6px 'Liberation Sans',sans-serif;color:#3c3c3c;white-space:nowrap;transform:scaleX(0.905);transform-origin:0 0;;-webkit-text-stroke:0.12px #3c3c3c">Socket</div>
<div style="position:absolute;left:125px;top:370.86px;font:normal 6px/6px 'Liberation Sans',sans-serif;color:#3c3c3c;white-space:nowrap;transform:scaleX(0.905);transform-origin:0 0;;-webkit-text-stroke:0.12px #3c3c3c">Elbow</div>
<div style="position:absolute;left:17.1px;top:437.8px;width:938.5px;height:28.3px;border:1px solid #dcdcdc;border-top-color:#d0d1d3;box-sizing:border-box;background:#fdfdfb"></div>
<div style="position:absolute;left:13px;top:466.6px;width:948px;height:1.4px;background:#f3f8f3"></div>
<div style="position:absolute;left:29.5px;top:448.46px;font:normal 6.4px/6.4px 'Liberation Sans',sans-serif;color:#666;white-space:nowrap;transform:scaleX(0.78);transform-origin:0 0;">Page size:</div>
<div style="position:absolute;left:55.6px;top:445.1px;width:23.6px;height:12.3px;background:#fff;border:1px solid #d8d8d8;box-sizing:border-box"></div>
<div style="position:absolute;left:57.8px;top:448.26px;font:normal 6.4px/6.4px 'Liberation Sans',sans-serif;color:#333;white-space:nowrap;transform:scaleX(0.9);transform-origin:0 0;">20</div>
<svg style="position:absolute;left:72.8px;top:450.3px" width="4" height="3" viewBox="0 0 4 3"><path d="M0,0.2 H4 L2,2.6 Z" fill="#333"/></svg>
<div style="position:absolute;right:333.79999999999995px;top:447.46px;font:normal 6.4px/6.4px 'Liberation Sans',sans-serif;color:#555;white-space:nowrap;transform:scaleX(0.83);transform-origin:100% 0;">Page 1 of 15 (298 items)</div>
<svg style="position:absolute;left:651.6px;top:443.6px" width="12" height="12" viewBox="0 0 12 12"><circle cx="6" cy="6" r="5.4" fill="none" stroke="#d4d4d8" stroke-width="0.9"/><path d="M6,4 L3.8,6 L6,8 Z M8.2,4 L6,6 L8.2,8 Z" fill="#d0d0d4"/></svg>
<svg style="position:absolute;left:668px;top:443.6px" width="12" height="12" viewBox="0 0 12 12"><circle cx="6" cy="6" r="5.4" fill="none" stroke="#d4d4d8" stroke-width="0.9"/><path d="M7,4 L4.8,6 L7,8 Z" fill="#d0d0d4"/></svg>
<div style="position:absolute;left:684px;top:445.2px;width:16.4px;height:9.7px;background:#a6a6bf"></div>
<div style="position:absolute;left:392.20000000000005px;width:600px;text-align:center;top:447.06px;font:normal 6.2px/6.2px 'Liberation Sans',sans-serif;color:#fff;white-space:nowrap;transform:scaleX(0.9);transform-origin:50% 0;">1</div>
<div style="position:absolute;left:410.70000000000005px;width:600px;text-align:center;top:447.56px;font:normal 6.2px/6.2px 'Liberation Sans',sans-serif;color:#555;white-space:nowrap;transform:scaleX(0.9);transform-origin:50% 0;">2</div>
<div style="position:absolute;left:429.5px;width:600px;text-align:center;top:447.56px;font:normal 6.2px/6.2px 'Liberation Sans',sans-serif;color:#555;white-space:nowrap;transform:scaleX(0.9);transform-origin:50% 0;">3</div>
<div style="position:absolute;left:448.20000000000005px;width:600px;text-align:center;top:447.56px;font:normal 6.2px/6.2px 'Liberation Sans',sans-serif;color:#555;white-space:nowrap;transform:scaleX(0.9);transform-origin:50% 0;">4</div>
<div style="position:absolute;left:466.9px;width:600px;text-align:center;top:447.56px;font:normal 6.2px/6.2px 'Liberation Sans',sans-serif;color:#555;white-space:nowrap;transform:scaleX(0.9);transform-origin:50% 0;">5</div>
<div style="position:absolute;left:485.6px;width:600px;text-align:center;top:447.56px;font:normal 6.2px/6.2px 'Liberation Sans',sans-serif;color:#555;white-space:nowrap;transform:scaleX(0.9);transform-origin:50% 0;">6</div>
<div style="position:absolute;left:504.20000000000005px;width:600px;text-align:center;top:447.56px;font:normal 6.2px/6.2px 'Liberation Sans',sans-serif;color:#555;white-space:nowrap;transform:scaleX(0.9);transform-origin:50% 0;">7</div>
<div style="position:absolute;left:525.7px;width:600px;text-align:center;top:447.56px;font:normal 6.2px/6.2px 'Liberation Sans',sans-serif;color:#555;white-space:nowrap;transform:scaleX(0.9);transform-origin:50% 0;">...</div>
<div style="position:absolute;left:548.3px;width:600px;text-align:center;top:447.56px;font:normal 6.2px/6.2px 'Liberation Sans',sans-serif;color:#555;white-space:nowrap;transform:scaleX(0.9);transform-origin:50% 0;">13</div>
<div style="position:absolute;left:570.3px;width:600px;text-align:center;top:447.56px;font:normal 6.2px/6.2px 'Liberation Sans',sans-serif;color:#555;white-space:nowrap;transform:scaleX(0.9);transform-origin:50% 0;">14</div>
<div style="position:absolute;left:591.4px;width:600px;text-align:center;top:447.56px;font:normal 6.2px/6.2px 'Liberation Sans',sans-serif;color:#555;white-space:nowrap;transform:scaleX(0.9);transform-origin:50% 0;">15</div>
<svg style="position:absolute;left:905.3px;top:443.6px" width="12" height="12" viewBox="0 0 12 12"><circle cx="6" cy="6" r="5.4" fill="none" stroke="#555" stroke-width="0.9"/><path d="M5,4 L7.4,6 L5,8 Z" fill="#555"/></svg>
<svg style="position:absolute;left:922px;top:443.6px" width="12" height="12" viewBox="0 0 12 12"><circle cx="6" cy="6" r="5.4" fill="none" stroke="#555" stroke-width="0.9"/><path d="M4,4 L6.2,6 L4,8 Z M6.4,4 L8.6,6 L6.4,8 Z" fill="#555"/></svg>
<svg style="position:absolute;left:938.5px;top:443.6px" width="12" height="12" viewBox="0 0 12 12"><circle cx="6" cy="6" r="5.4" fill="none" stroke="#555" stroke-width="0.9"/><circle cx="6" cy="6" r="2.6" fill="#777"/></svg>
<div style="position:absolute;left:0px;top:0px;width:13px;height:468px;background:#000"></div>
<div style="position:absolute;left:961px;top:0px;width:13px;height:468px;background:#000"></div>
</body></html>
